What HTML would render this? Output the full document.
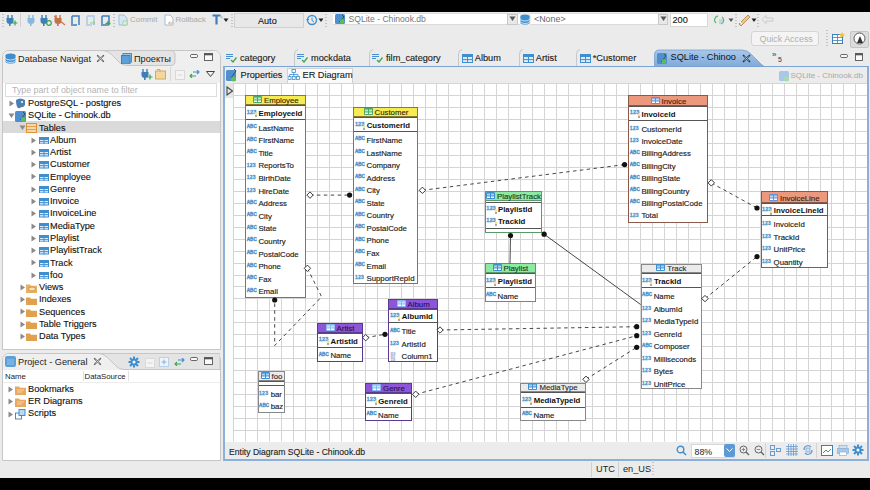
<!DOCTYPE html><html><head><meta charset="utf-8"><style>

html,body{margin:0;padding:0;}
body{width:870px;height:490px;position:relative;overflow:hidden;background:#ebebeb;font-family:"Liberation Sans", sans-serif;}
.t{position:absolute;white-space:nowrap;line-height:1;font-family:"Liberation Sans", sans-serif;}
svg{display:block;}

</style></head><body>
<div style="position:absolute;left:0px;top:0px;width:870px;height:12px;background:#000;"></div>
<div style="position:absolute;left:0px;top:478.4px;width:870px;height:12px;background:#000;"></div>
<svg style="position:absolute;left:1.5px;top:14px;" width="2" height="13" viewBox="0 0 2 13"><rect x="0.5" y="0" width="1" height="1" fill="#9a9a9a"/><rect x="0.5" y="3" width="1" height="1" fill="#9a9a9a"/><rect x="0.5" y="6" width="1" height="1" fill="#9a9a9a"/><rect x="0.5" y="9" width="1" height="1" fill="#9a9a9a"/><rect x="0.5" y="12" width="1" height="1" fill="#9a9a9a"/></svg>
<svg style="position:absolute;left:6px;top:15px;" width="12" height="11" viewBox="0 0 12 11"><path d="M2 0 v3 M6 0 v3" stroke="#3f7fb8" stroke-width="1.4"/><path d="M0.5 3 h7 v3 q0 3 -3.5 3 q-3.5 0 -3.5 -3 z" fill="#3f7fb8"/><rect x="3" y="8.5" width="1.6" height="2.5" fill="#3f7fb8"/><path d="M9 5.5 v5 M6.5 8 h5" stroke="#3aa650" stroke-width="1.2"/></svg>
<div style="position:absolute;left:20px;top:13px;width:1px;height:14px;background:#cfcfcf;"></div>
<svg style="position:absolute;left:27px;top:15px;" width="12" height="11" viewBox="0 0 12 11"><path d="M2 0 v3 M6 0 v3" stroke="#8ab8dc" stroke-width="1.4"/><path d="M0.5 3 h7 v3 q0 3 -3.5 3 q-3.5 0 -3.5 -3 z" fill="#8ab8dc"/><rect x="3" y="8.5" width="1.6" height="2.5" fill="#8ab8dc"/></svg>
<svg style="position:absolute;left:40px;top:15px;" width="12" height="11" viewBox="0 0 12 11"><path d="M2 0 v3 M6 0 v3" stroke="#3f7fb8" stroke-width="1.4"/><path d="M0.5 3 h7 v3 q0 3 -3.5 3 q-3.5 0 -3.5 -3 z" fill="#3f7fb8"/><rect x="3" y="8.5" width="1.6" height="2.5" fill="#3f7fb8"/><circle cx="9" cy="8" r="2.3" stroke="#3aa650" stroke-width="1.2" fill="none"/></svg>
<svg style="position:absolute;left:54px;top:15px;" width="12" height="11" viewBox="0 0 12 11"><path d="M2 0 v3 M6 0 v3" stroke="#c5734a" stroke-width="1.4"/><path d="M0.5 3 h7 v3 q0 3 -3.5 3 q-3.5 0 -3.5 -3 z" fill="#c5734a"/><rect x="3" y="8.5" width="1.6" height="2.5" fill="#c5734a"/><path d="M0 1 L11 10" stroke="#c5734a" stroke-width="1.1"/></svg>
<svg style="position:absolute;left:70px;top:15px;" width="11" height="11" viewBox="0 0 11 11"><path d="M2 1 h7 v9 M1 10 h6 M2 1 v8" stroke="#3f7fb8" stroke-width="1.5" fill="none"/></svg>
<svg style="position:absolute;left:85px;top:15px;" width="11" height="11" viewBox="0 0 11 11"><path d="M2 1 h7 v9 M1 10 h6 M2 1 v8" stroke="#a8cbe6" stroke-width="1.5" fill="none"/><path d="M5 8 h5 M8 6 l2 2 l-2 2" stroke="#8fce8f" stroke-width="1" fill="none"/></svg>
<svg style="position:absolute;left:100px;top:15px;" width="11" height="11" viewBox="0 0 11 11"><path d="M2 1 h7 v9 M1 10 h6 M2 1 v8" stroke="#3f7fb8" stroke-width="1.5" fill="none"/><path d="M8 6 v5 M5.5 8.5 h5" stroke="#3aa650" stroke-width="1.4"/></svg>
<svg style="position:absolute;left:113px;top:14px;" width="2" height="13" viewBox="0 0 2 13"><rect x="0.5" y="0" width="1" height="1" fill="#9a9a9a"/><rect x="0.5" y="3" width="1" height="1" fill="#9a9a9a"/><rect x="0.5" y="6" width="1" height="1" fill="#9a9a9a"/><rect x="0.5" y="9" width="1" height="1" fill="#9a9a9a"/><rect x="0.5" y="12" width="1" height="1" fill="#9a9a9a"/></svg>
<svg style="position:absolute;left:118px;top:14px;" width="10" height="12" viewBox="0 0 10 12"><path d="M1 1 h5 l3 3 v7 h-8 z" fill="#d6e6f4" stroke="#9cc0e0"/><rect x="5" y="7" width="4" height="4" fill="#dff0df" stroke="#9fd09f" stroke-width="0.8"/></svg>
<div class="t" style="left:130px;top:16px;font-size:7.95px;color:#a8a8a8;font-weight:normal;">Commit</div>
<svg style="position:absolute;left:164px;top:14px;" width="10" height="12" viewBox="0 0 10 12"><path d="M1 1 h5 l3 3 v7 h-8 z" fill="#fff" stroke="#9cc0e0"/><path d="M5 9 h4 M6 7.5 l-1.5 1.5 l1.5 1.5" stroke="#e0a060" stroke-width="0.9" fill="none"/></svg>
<div class="t" style="left:175.5px;top:16px;font-size:7.95px;color:#a8a8a8;font-weight:normal;">Rollback</div>
<svg style="position:absolute;left:212px;top:14px;" width="12" height="12" viewBox="0 0 12 12"><path d="M0.5 1.5 h8 M4.5 1.5 v9" stroke="#3f7fb8" stroke-width="2.2"/><path d="M8 3 h3 M9.5 1.5 v3" stroke="#9cc0e0" stroke-width="0.8"/></svg>
<svg style="position:absolute;left:223px;top:18px;" width="6" height="5" viewBox="0 0 6 5"><path d="M0.5 0.5 h5 l-2.5 3.5 z" fill="#222"/></svg>
<svg style="position:absolute;left:231px;top:14px;" width="2" height="13" viewBox="0 0 2 13"><rect x="0.5" y="0" width="1" height="1" fill="#9a9a9a"/><rect x="0.5" y="3" width="1" height="1" fill="#9a9a9a"/><rect x="0.5" y="6" width="1" height="1" fill="#9a9a9a"/><rect x="0.5" y="9" width="1" height="1" fill="#9a9a9a"/><rect x="0.5" y="12" width="1" height="1" fill="#9a9a9a"/></svg>
<div style="position:absolute;left:233.5px;top:13px;width:70px;height:14.5px;background:#e8e8e8;border:1px solid #d0d0d0;box-sizing:border-box;"></div>
<div class="t" style="left:258px;top:16.6px;font-size:9.1px;color:#111;font-weight:normal;-webkit-text-stroke:0.1px #111;">Auto</div>
<svg style="position:absolute;left:306px;top:14px;" width="12" height="12" viewBox="0 0 12 12"><circle cx="6" cy="6" r="4.5" stroke="#3f8fd0" stroke-width="1.4" fill="none"/><path d="M6 3.5 v3 l2 1.5" stroke="#3f8fd0" stroke-width="1" fill="none"/><path d="M0 5 l1.5 2 l2 -2" fill="#3f8fd0"/></svg>
<svg style="position:absolute;left:318px;top:18px;" width="6" height="5" viewBox="0 0 6 5"><path d="M0.5 0.5 h5 l-2.5 3.5 z" fill="#222"/></svg>
<svg style="position:absolute;left:325px;top:14px;" width="2" height="13" viewBox="0 0 2 13"><rect x="0.5" y="0" width="1" height="1" fill="#9a9a9a"/><rect x="0.5" y="3" width="1" height="1" fill="#9a9a9a"/><rect x="0.5" y="6" width="1" height="1" fill="#9a9a9a"/><rect x="0.5" y="9" width="1" height="1" fill="#9a9a9a"/><rect x="0.5" y="12" width="1" height="1" fill="#9a9a9a"/></svg>
<div style="position:absolute;left:333px;top:12.5px;width:187px;height:12.5px;background:#fff;border-top:1px solid #dadada;border-bottom:1px solid #dadada;box-sizing:border-box;"></div>
<svg style="position:absolute;left:334.5px;top:13.5px;" width="10" height="10" viewBox="0 0 10 10"><rect x="0" y="0" width="10" height="10" rx="1.5" fill="#4f8fd0"/><path d="M7 1 L9 3 L5 7 L4 8" stroke="#2a5a3a" stroke-width="1" fill="none"/><circle cx="7" cy="7.5" r="2.2" fill="#5bbf5b"/></svg>
<div class="t" style="left:348.5px;top:15.3px;font-size:8.6px;color:#777;font-weight:normal;">SQLite - Chinook.db</div>
<div style="position:absolute;left:507px;top:13.5px;width:11px;height:11px;background:#e8e8e8;border:1px solid #c8c8c8;box-sizing:border-box;"></div>
<svg style="position:absolute;left:509px;top:16px;" width="7" height="6" viewBox="0 0 7 6"><path d="M0.5 0.5 h6 l-3 4.5 z" fill="#555"/></svg>
<svg style="position:absolute;left:520px;top:13.5px;" width="10" height="11" viewBox="0 0 10 11"><ellipse cx="5" cy="2.5" rx="4.5" ry="2" fill="#3f8fd0"/><path d="M0.5 2.5 v6 a4.5 2 0 0 0 9 0 v-6" fill="#3f8fd0"/><path d="M0.5 5 a4.5 2 0 0 0 9 0 M0.5 7.5 a4.5 2 0 0 0 9 0" stroke="#fff" stroke-width="0.7" fill="none"/></svg>
<div style="position:absolute;left:531px;top:12.5px;width:136px;height:12.5px;background:#fff;border-top:1px solid #dadada;border-bottom:1px solid #dadada;box-sizing:border-box;"></div>
<div class="t" style="left:534px;top:15px;font-size:8.9px;color:#666;font-weight:normal;">&lt;None&gt;</div>
<div style="position:absolute;left:657.5px;top:13.5px;width:10px;height:11px;background:#e8e8e8;border:1px solid #c8c8c8;box-sizing:border-box;"></div>
<svg style="position:absolute;left:659.5px;top:16px;" width="7" height="6" viewBox="0 0 7 6"><path d="M0.5 0.5 h6 l-3 4.5 z" fill="#555"/></svg>
<div style="position:absolute;left:670px;top:12.5px;width:38px;height:14px;background:#fff;border:1px solid #d8d8d8;box-sizing:border-box;"></div>
<div class="t" style="left:672.5px;top:16.2px;font-size:9.2px;color:#111;font-weight:normal;-webkit-text-stroke:0.1px #111;">200</div>
<svg style="position:absolute;left:714px;top:14px;" width="12" height="12" viewBox="0 0 12 12"><path d="M2 9 a4 4 0 0 1 2 -7 M8 3 a4 4 0 0 1 -1 7" stroke="#5cc070" stroke-width="1.3" fill="none"/><path d="M6 5 v5 M8 5 v5" stroke="#8ab8dc" stroke-width="0.8"/></svg>
<svg style="position:absolute;left:728px;top:18px;" width="6" height="5" viewBox="0 0 6 5"><path d="M0.5 0.5 h5 l-2.5 3.5 z" fill="#555"/></svg>
<svg style="position:absolute;left:735px;top:14px;" width="2" height="13" viewBox="0 0 2 13"><rect x="0.5" y="0" width="1" height="1" fill="#9a9a9a"/><rect x="0.5" y="3" width="1" height="1" fill="#9a9a9a"/><rect x="0.5" y="6" width="1" height="1" fill="#9a9a9a"/><rect x="0.5" y="9" width="1" height="1" fill="#9a9a9a"/><rect x="0.5" y="12" width="1" height="1" fill="#9a9a9a"/></svg>
<svg style="position:absolute;left:737px;top:13px;" width="14" height="13" viewBox="0 0 14 13"><path d="M2 11 L11 2 L13 4 L4 13 Z" fill="#e8c890" stroke="#b08050" stroke-width="0.8"/><path d="M3 9 l2 2" stroke="#fff"/></svg>
<svg style="position:absolute;left:751px;top:18px;" width="6" height="5" viewBox="0 0 6 5"><path d="M0.5 0.5 h5 l-2.5 3.5 z" fill="#222"/></svg>
<svg style="position:absolute;left:757px;top:14px;" width="2" height="13" viewBox="0 0 2 13"><rect x="0.5" y="0" width="1" height="1" fill="#9a9a9a"/><rect x="0.5" y="3" width="1" height="1" fill="#9a9a9a"/><rect x="0.5" y="6" width="1" height="1" fill="#9a9a9a"/><rect x="0.5" y="9" width="1" height="1" fill="#9a9a9a"/><rect x="0.5" y="12" width="1" height="1" fill="#9a9a9a"/></svg>
<svg style="position:absolute;left:761px;top:15px;" width="13" height="9" viewBox="0 0 13 9"><path d="M5 0.5 L1 4.5 L5 8.5 V6 H12 V3 H5 Z" fill="none" stroke="#c8c8c8"/></svg>
<div style="position:absolute;left:751px;top:31px;width:68px;height:15px;background:#f4f4f4;border:1px solid #d4d4d4;border-radius:3px;box-sizing:border-box;"></div>
<div class="t" style="left:759.5px;top:34.5px;font-size:8.9px;color:#b0b0b0;font-weight:normal;">Quick Access</div>
<svg style="position:absolute;left:826px;top:30px;" width="2" height="17" viewBox="0 0 2 17"><rect x="0.5" y="0" width="1" height="1" fill="#9a9a9a"/><rect x="0.5" y="3" width="1" height="1" fill="#9a9a9a"/><rect x="0.5" y="6" width="1" height="1" fill="#9a9a9a"/><rect x="0.5" y="9" width="1" height="1" fill="#9a9a9a"/><rect x="0.5" y="12" width="1" height="1" fill="#9a9a9a"/><rect x="0.5" y="15" width="1" height="1" fill="#9a9a9a"/></svg>
<svg style="position:absolute;left:832px;top:32px;" width="13" height="12" viewBox="0 0 13 12"><rect x="0.5" y="2.5" width="10" height="9" fill="#fff" stroke="#3f7fb8"/><path d="M0.5 5.5 h10 M0.5 8.5 h10 M5.5 2.5 v9" stroke="#3f7fb8" stroke-width="0.8"/><path d="M10 0 l1 2 l2 0.5 l-1.5 1.3 l0.5 2 l-2 -1 l-2 1 l0.5 -2 l-1.5 -1.3 l2 -0.5 z" fill="#f0c040"/></svg>
<div style="position:absolute;left:850px;top:30.5px;width:19px;height:17px;background:#dcdcdc;border:1px solid #c4c4c4;border-radius:2px;box-sizing:border-box;"></div>
<svg style="position:absolute;left:853px;top:32px;" width="13" height="13" viewBox="0 0 13 13"><circle cx="6.5" cy="6.5" r="5.5" fill="#fff" stroke="#555"/><path d="M4 11 L7 4 L10 11 Z" fill="#333"/></svg>
<div style="position:absolute;left:1.5px;top:50px;width:219px;height:300px;background:#fff;border:1px solid #c6c6c6;border-radius:7px 7px 0 0;box-sizing:border-box;"></div>
<div style="position:absolute;left:2.5px;top:51px;width:217px;height:31.5px;background:#efefef;border-radius:6px 6px 0 0;"></div>
<svg style="position:absolute;left:2.5px;top:50px;" width="217" height="17" viewBox="0 0 217 17"><path d="M100 0.5 Q104 0.5 108 4 L117 13 Q120 15.5 125 15.5 H168 Q172 15.5 172 11 V5 Q172 0.5 167 0.5 Z" fill="#e4e4e4" stroke="#c6c6c6" stroke-width="1"/></svg>
<svg style="position:absolute;left:5px;top:53px;" width="11" height="11" viewBox="0 0 11 11"><ellipse cx="5.5" cy="2.5" rx="5" ry="2" fill="#3f8fd0"/><path d="M0.5 2.5 v6 a5 2 0 0 0 10 0 v-6" fill="#3f8fd0"/><path d="M0.5 5 a5 2 0 0 0 10 0 M0.5 7.5 a5 2 0 0 0 10 0" stroke="#fff" stroke-width="0.7" fill="none"/></svg>
<div class="t" style="left:18px;top:54.5px;font-size:9.2px;color:#222;font-weight:normal;">Database Navigat</div>
<svg style="position:absolute;left:96px;top:54px;" width="9" height="9" viewBox="0 0 9 9"><path d="M1.2 1.2 L7.8 7.8 M7.8 1.2 L1.2 7.8" stroke="#555" stroke-width="1.4"/><path d="M2.5 2.5 L6.5 6.5 M6.5 2.5 L2.5 6.5" stroke="#efefef" stroke-width="0.6"/></svg>
<svg style="position:absolute;left:121px;top:53px;" width="11" height="11" viewBox="0 0 11 11"><rect x="2" y="0.5" width="8.5" height="8.5" fill="#9cc5ea" stroke="#3f8fd0"/><rect x="0.5" y="2.5" width="8.5" height="8.5" fill="#5d9fd8" stroke="#3f7fb8"/></svg>
<div class="t" style="left:134px;top:54.5px;font-size:9.2px;color:#222;font-weight:normal;">Проекты</div>
<svg style="position:absolute;left:189.5px;top:53.5px;" width="8" height="4" viewBox="0 0 8 4"><rect x="0.5" y="0.5" width="7" height="3" rx="1.2" fill="#fafafa" stroke="#555" stroke-width="0.9"/></svg>
<svg style="position:absolute;left:204px;top:53px;" width="9" height="8" viewBox="0 0 9 8"><rect x="0.5" y="0.5" width="8" height="7" fill="#fafafa" stroke="#555" stroke-width="0.9"/><rect x="0.5" y="0.5" width="8" height="1.8" fill="#555"/></svg>
<svg style="position:absolute;left:141px;top:69px;" width="12" height="11" viewBox="0 0 12 11"><path d="M2 0 v3 M6 0 v3" stroke="#3f7fb8" stroke-width="1.4"/><path d="M0.5 3 h7 v3 q0 3 -3.5 3 q-3.5 0 -3.5 -3 z" fill="#3f7fb8"/><rect x="3" y="8.5" width="1.6" height="2.5" fill="#3f7fb8"/><path d="M9 5.5 v5 M6.5 8 h5" stroke="#3aa650" stroke-width="1.2"/></svg>
<svg style="position:absolute;left:155px;top:69px;" width="12" height="11" viewBox="0 0 12 11"><rect x="0.5" y="2" width="10" height="8" fill="#f0d8a0" stroke="#d8a850"/><path d="M2 0.5 h3 v2" stroke="#d8a850" fill="none"/></svg>
<div style="position:absolute;left:170px;top:67px;width:1px;height:14px;background:#d8d8d8;"></div>
<svg style="position:absolute;left:175px;top:70px;" width="10" height="10" viewBox="0 0 10 10"><rect x="0.5" y="0.5" width="9" height="9" fill="#f4f4f4" stroke="#d8d8d8"/><path d="M2.5 5 h5" stroke="#d8d8d8"/></svg>
<svg style="position:absolute;left:189px;top:70px;" width="11" height="8" viewBox="0 0 11 8"><path d="M1 6 h6 M3 4 l-2 2 l2 2" stroke="#3aa650" stroke-width="1.1" fill="none"/><path d="M4 2 h6 M8 0 l2 2 l-2 2" stroke="#3f8fd0" stroke-width="1.1" fill="none"/></svg>
<svg style="position:absolute;left:206px;top:71px;" width="9" height="6" viewBox="0 0 9 6"><path d="M0.5 0.5 h8 l-4 5 z" fill="none" stroke="#444"/></svg>
<div style="position:absolute;left:4.5px;top:83px;width:212px;height:14px;background:#fff;border:1px solid #dcdcdc;box-sizing:border-box;"></div>
<div class="t" style="left:12px;top:85.5px;font-size:8.8px;color:#b4b4b4;font-weight:normal;">Type part of object name to filter</div>
<div style="position:absolute;left:2.5px;top:121.14px;width:217px;height:11.5px;background:#dadada;"></div>
<svg style="position:absolute;left:7.8px;top:99.8px;" width="7" height="7" viewBox="0 0 7 7"><path d="M1.5 0.5 L6 3.5 L1.5 6.5 Z" fill="#8a8a8a"/></svg>
<svg style="position:absolute;left:15px;top:98.3px;" width="11" height="11" viewBox="0 0 11 11"><path d="M1 2 q4 -3 9 0 v5 q-2 3 -4 2 q-1 2 -3 1 q-2 -2 -2 -8z" fill="#4a7fb0"/><circle cx="7" cy="4" r="1" fill="#fff"/></svg>
<div class="t" style="left:28px;top:99.0px;font-size:9.2px;color:#111;font-weight:normal;-webkit-text-stroke:0.12px #111;">PostgreSQL - postgres</div>
<svg style="position:absolute;left:7.8px;top:112.07px;" width="7" height="7" viewBox="0 0 7 7"><path d="M0.5 1.5 L6.5 1.5 L3.5 6 Z" fill="#8a8a8a"/></svg>
<svg style="position:absolute;left:15px;top:110.57px;" width="11" height="11" viewBox="0 0 11 11"><rect x="0" y="0" width="11" height="11" rx="1.5" fill="#4f8fd0"/><path d="M8 1 L10 3 L6 8 L5 9" stroke="#2a5a3a" stroke-width="1" fill="none"/><circle cx="8" cy="8.5" r="2.2" fill="#5bbf5b"/></svg>
<div class="t" style="left:28px;top:111.27px;font-size:9.2px;color:#111;font-weight:normal;-webkit-text-stroke:0.12px #111;">SQLite - Chinook.db</div>
<svg style="position:absolute;left:18.8px;top:124.34px;" width="7" height="7" viewBox="0 0 7 7"><path d="M0.5 1.5 L6.5 1.5 L3.5 6 Z" fill="#8a8a8a"/></svg>
<svg style="position:absolute;left:26px;top:123.34px;" width="11" height="10" viewBox="0 0 11 10"><rect x="0.5" y="0.5" width="10" height="9" fill="#f6d8a8" stroke="#e0903a"/><path d="M0.5 3.5 h10 M0.5 6.5 h10" stroke="#e0903a" stroke-width="0.8"/></svg>
<div class="t" style="left:39px;top:123.54px;font-size:9.2px;color:#111;font-weight:normal;-webkit-text-stroke:0.12px #111;">Tables</div>
<svg style="position:absolute;left:29.8px;top:136.61px;" width="7" height="7" viewBox="0 0 7 7"><path d="M1.5 0.5 L6 3.5 L1.5 6.5 Z" fill="#8a8a8a"/></svg>
<svg style="position:absolute;left:38.5px;top:136.81px;" width="10" height="7.5" viewBox="0 0 10 7.5"><rect x="0.5" y="0.5" width="9" height="6.5" fill="#dcebf8" stroke="#3f8fd0"/><rect x="0.5" y="0.5" width="9" height="2.5" fill="#3f8fd0"/><line x1="5.0" y1="0" x2="5.0" y2="7.5" stroke="#3f8fd0"/><line x1="0" y1="4.65" x2="10" y2="4.65" stroke="#3f8fd0"/></svg>
<div class="t" style="left:50px;top:135.81px;font-size:9.2px;color:#111;font-weight:normal;-webkit-text-stroke:0.12px #111;">Album</div>
<svg style="position:absolute;left:29.8px;top:148.88px;" width="7" height="7" viewBox="0 0 7 7"><path d="M1.5 0.5 L6 3.5 L1.5 6.5 Z" fill="#8a8a8a"/></svg>
<svg style="position:absolute;left:38.5px;top:149.07999999999998px;" width="10" height="7.5" viewBox="0 0 10 7.5"><rect x="0.5" y="0.5" width="9" height="6.5" fill="#dcebf8" stroke="#3f8fd0"/><rect x="0.5" y="0.5" width="9" height="2.5" fill="#3f8fd0"/><line x1="5.0" y1="0" x2="5.0" y2="7.5" stroke="#3f8fd0"/><line x1="0" y1="4.65" x2="10" y2="4.65" stroke="#3f8fd0"/></svg>
<div class="t" style="left:50px;top:148.07999999999998px;font-size:9.2px;color:#111;font-weight:normal;-webkit-text-stroke:0.12px #111;">Artist</div>
<svg style="position:absolute;left:29.8px;top:161.14999999999998px;" width="7" height="7" viewBox="0 0 7 7"><path d="M1.5 0.5 L6 3.5 L1.5 6.5 Z" fill="#8a8a8a"/></svg>
<svg style="position:absolute;left:38.5px;top:161.34999999999997px;" width="10" height="7.5" viewBox="0 0 10 7.5"><rect x="0.5" y="0.5" width="9" height="6.5" fill="#dcebf8" stroke="#3f8fd0"/><rect x="0.5" y="0.5" width="9" height="2.5" fill="#3f8fd0"/><line x1="5.0" y1="0" x2="5.0" y2="7.5" stroke="#3f8fd0"/><line x1="0" y1="4.65" x2="10" y2="4.65" stroke="#3f8fd0"/></svg>
<div class="t" style="left:50px;top:160.34999999999997px;font-size:9.2px;color:#111;font-weight:normal;-webkit-text-stroke:0.12px #111;">Customer</div>
<svg style="position:absolute;left:29.8px;top:173.42000000000002px;" width="7" height="7" viewBox="0 0 7 7"><path d="M1.5 0.5 L6 3.5 L1.5 6.5 Z" fill="#8a8a8a"/></svg>
<svg style="position:absolute;left:38.5px;top:173.62px;" width="10" height="7.5" viewBox="0 0 10 7.5"><rect x="0.5" y="0.5" width="9" height="6.5" fill="#dcebf8" stroke="#3f8fd0"/><rect x="0.5" y="0.5" width="9" height="2.5" fill="#3f8fd0"/><line x1="5.0" y1="0" x2="5.0" y2="7.5" stroke="#3f8fd0"/><line x1="0" y1="4.65" x2="10" y2="4.65" stroke="#3f8fd0"/></svg>
<div class="t" style="left:50px;top:172.62px;font-size:9.2px;color:#111;font-weight:normal;-webkit-text-stroke:0.12px #111;">Employee</div>
<svg style="position:absolute;left:29.8px;top:185.69px;" width="7" height="7" viewBox="0 0 7 7"><path d="M1.5 0.5 L6 3.5 L1.5 6.5 Z" fill="#8a8a8a"/></svg>
<svg style="position:absolute;left:38.5px;top:185.89px;" width="10" height="7.5" viewBox="0 0 10 7.5"><rect x="0.5" y="0.5" width="9" height="6.5" fill="#dcebf8" stroke="#3f8fd0"/><rect x="0.5" y="0.5" width="9" height="2.5" fill="#3f8fd0"/><line x1="5.0" y1="0" x2="5.0" y2="7.5" stroke="#3f8fd0"/><line x1="0" y1="4.65" x2="10" y2="4.65" stroke="#3f8fd0"/></svg>
<div class="t" style="left:50px;top:184.89px;font-size:9.2px;color:#111;font-weight:normal;-webkit-text-stroke:0.12px #111;">Genre</div>
<svg style="position:absolute;left:29.8px;top:197.95999999999998px;" width="7" height="7" viewBox="0 0 7 7"><path d="M1.5 0.5 L6 3.5 L1.5 6.5 Z" fill="#8a8a8a"/></svg>
<svg style="position:absolute;left:38.5px;top:198.15999999999997px;" width="10" height="7.5" viewBox="0 0 10 7.5"><rect x="0.5" y="0.5" width="9" height="6.5" fill="#dcebf8" stroke="#3f8fd0"/><rect x="0.5" y="0.5" width="9" height="2.5" fill="#3f8fd0"/><line x1="5.0" y1="0" x2="5.0" y2="7.5" stroke="#3f8fd0"/><line x1="0" y1="4.65" x2="10" y2="4.65" stroke="#3f8fd0"/></svg>
<div class="t" style="left:50px;top:197.15999999999997px;font-size:9.2px;color:#111;font-weight:normal;-webkit-text-stroke:0.12px #111;">Invoice</div>
<svg style="position:absolute;left:29.8px;top:210.23px;" width="7" height="7" viewBox="0 0 7 7"><path d="M1.5 0.5 L6 3.5 L1.5 6.5 Z" fill="#8a8a8a"/></svg>
<svg style="position:absolute;left:38.5px;top:210.42999999999998px;" width="10" height="7.5" viewBox="0 0 10 7.5"><rect x="0.5" y="0.5" width="9" height="6.5" fill="#dcebf8" stroke="#3f8fd0"/><rect x="0.5" y="0.5" width="9" height="2.5" fill="#3f8fd0"/><line x1="5.0" y1="0" x2="5.0" y2="7.5" stroke="#3f8fd0"/><line x1="0" y1="4.65" x2="10" y2="4.65" stroke="#3f8fd0"/></svg>
<div class="t" style="left:50px;top:209.42999999999998px;font-size:9.2px;color:#111;font-weight:normal;-webkit-text-stroke:0.12px #111;">InvoiceLine</div>
<svg style="position:absolute;left:29.8px;top:222.5px;" width="7" height="7" viewBox="0 0 7 7"><path d="M1.5 0.5 L6 3.5 L1.5 6.5 Z" fill="#8a8a8a"/></svg>
<svg style="position:absolute;left:38.5px;top:222.7px;" width="10" height="7.5" viewBox="0 0 10 7.5"><rect x="0.5" y="0.5" width="9" height="6.5" fill="#dcebf8" stroke="#3f8fd0"/><rect x="0.5" y="0.5" width="9" height="2.5" fill="#3f8fd0"/><line x1="5.0" y1="0" x2="5.0" y2="7.5" stroke="#3f8fd0"/><line x1="0" y1="4.65" x2="10" y2="4.65" stroke="#3f8fd0"/></svg>
<div class="t" style="left:50px;top:221.7px;font-size:9.2px;color:#111;font-weight:normal;-webkit-text-stroke:0.12px #111;">MediaType</div>
<svg style="position:absolute;left:29.8px;top:234.76999999999998px;" width="7" height="7" viewBox="0 0 7 7"><path d="M1.5 0.5 L6 3.5 L1.5 6.5 Z" fill="#8a8a8a"/></svg>
<svg style="position:absolute;left:38.5px;top:234.96999999999997px;" width="10" height="7.5" viewBox="0 0 10 7.5"><rect x="0.5" y="0.5" width="9" height="6.5" fill="#dcebf8" stroke="#3f8fd0"/><rect x="0.5" y="0.5" width="9" height="2.5" fill="#3f8fd0"/><line x1="5.0" y1="0" x2="5.0" y2="7.5" stroke="#3f8fd0"/><line x1="0" y1="4.65" x2="10" y2="4.65" stroke="#3f8fd0"/></svg>
<div class="t" style="left:50px;top:233.96999999999997px;font-size:9.2px;color:#111;font-weight:normal;-webkit-text-stroke:0.12px #111;">Playlist</div>
<svg style="position:absolute;left:29.8px;top:247.04000000000002px;" width="7" height="7" viewBox="0 0 7 7"><path d="M1.5 0.5 L6 3.5 L1.5 6.5 Z" fill="#8a8a8a"/></svg>
<svg style="position:absolute;left:38.5px;top:247.24px;" width="10" height="7.5" viewBox="0 0 10 7.5"><rect x="0.5" y="0.5" width="9" height="6.5" fill="#dcebf8" stroke="#3f8fd0"/><rect x="0.5" y="0.5" width="9" height="2.5" fill="#3f8fd0"/><line x1="5.0" y1="0" x2="5.0" y2="7.5" stroke="#3f8fd0"/><line x1="0" y1="4.65" x2="10" y2="4.65" stroke="#3f8fd0"/></svg>
<div class="t" style="left:50px;top:246.24px;font-size:9.2px;color:#111;font-weight:normal;-webkit-text-stroke:0.12px #111;">PlaylistTrack</div>
<svg style="position:absolute;left:29.8px;top:259.31px;" width="7" height="7" viewBox="0 0 7 7"><path d="M1.5 0.5 L6 3.5 L1.5 6.5 Z" fill="#8a8a8a"/></svg>
<svg style="position:absolute;left:38.5px;top:259.51px;" width="10" height="7.5" viewBox="0 0 10 7.5"><rect x="0.5" y="0.5" width="9" height="6.5" fill="#dcebf8" stroke="#3f8fd0"/><rect x="0.5" y="0.5" width="9" height="2.5" fill="#3f8fd0"/><line x1="5.0" y1="0" x2="5.0" y2="7.5" stroke="#3f8fd0"/><line x1="0" y1="4.65" x2="10" y2="4.65" stroke="#3f8fd0"/></svg>
<div class="t" style="left:50px;top:258.51px;font-size:9.2px;color:#111;font-weight:normal;-webkit-text-stroke:0.12px #111;">Track</div>
<svg style="position:absolute;left:29.8px;top:271.58px;" width="7" height="7" viewBox="0 0 7 7"><path d="M1.5 0.5 L6 3.5 L1.5 6.5 Z" fill="#8a8a8a"/></svg>
<svg style="position:absolute;left:38.5px;top:271.78px;" width="10" height="7.5" viewBox="0 0 10 7.5"><rect x="0.5" y="0.5" width="9" height="6.5" fill="#dcebf8" stroke="#3f8fd0"/><rect x="0.5" y="0.5" width="9" height="2.5" fill="#3f8fd0"/><line x1="5.0" y1="0" x2="5.0" y2="7.5" stroke="#3f8fd0"/><line x1="0" y1="4.65" x2="10" y2="4.65" stroke="#3f8fd0"/></svg>
<div class="t" style="left:50px;top:270.78px;font-size:9.2px;color:#111;font-weight:normal;-webkit-text-stroke:0.12px #111;">foo</div>
<svg style="position:absolute;left:18.8px;top:283.84999999999997px;" width="7" height="7" viewBox="0 0 7 7"><path d="M1.5 0.5 L6 3.5 L1.5 6.5 Z" fill="#8a8a8a"/></svg>
<svg style="position:absolute;left:26px;top:282.84999999999997px;" width="11" height="10" viewBox="0 0 11 10"><path d="M0 1.5 h4 l1 1.2 h6 v7.3 h-11 z" fill="#e8b060"/><ellipse cx="6" cy="6" rx="3.5" ry="2" fill="#f8e0b0" stroke="#c08040" stroke-width="0.7"/></svg>
<div class="t" style="left:39px;top:283.04999999999995px;font-size:9.2px;color:#111;font-weight:normal;-webkit-text-stroke:0.12px #111;">Views</div>
<svg style="position:absolute;left:18.8px;top:296.12px;" width="7" height="7" viewBox="0 0 7 7"><path d="M1.5 0.5 L6 3.5 L1.5 6.5 Z" fill="#8a8a8a"/></svg>
<svg style="position:absolute;left:26px;top:295.62px;" width="11" height="9" viewBox="0 0 11 9"><path d="M0 1.5 h4 l1 1.2 h6 v6.3 h-11 z" fill="#e0a050"/></svg>
<div class="t" style="left:39px;top:295.32px;font-size:9.2px;color:#111;font-weight:normal;-webkit-text-stroke:0.12px #111;">Indexes</div>
<svg style="position:absolute;left:18.8px;top:308.39px;" width="7" height="7" viewBox="0 0 7 7"><path d="M1.5 0.5 L6 3.5 L1.5 6.5 Z" fill="#8a8a8a"/></svg>
<svg style="position:absolute;left:26px;top:307.89px;" width="11" height="9" viewBox="0 0 11 9"><path d="M0 1.5 h4 l1 1.2 h6 v6.3 h-11 z" fill="#e0a050"/></svg>
<div class="t" style="left:39px;top:307.59px;font-size:9.2px;color:#111;font-weight:normal;-webkit-text-stroke:0.12px #111;">Sequences</div>
<svg style="position:absolute;left:18.8px;top:320.65999999999997px;" width="7" height="7" viewBox="0 0 7 7"><path d="M1.5 0.5 L6 3.5 L1.5 6.5 Z" fill="#8a8a8a"/></svg>
<svg style="position:absolute;left:26px;top:320.15999999999997px;" width="11" height="9" viewBox="0 0 11 9"><path d="M0 1.5 h4 l1 1.2 h6 v6.3 h-11 z" fill="#e0a050"/></svg>
<div class="t" style="left:39px;top:319.85999999999996px;font-size:9.2px;color:#111;font-weight:normal;-webkit-text-stroke:0.12px #111;">Table Triggers</div>
<svg style="position:absolute;left:18.8px;top:332.93px;" width="7" height="7" viewBox="0 0 7 7"><path d="M1.5 0.5 L6 3.5 L1.5 6.5 Z" fill="#8a8a8a"/></svg>
<svg style="position:absolute;left:26px;top:332.43px;" width="11" height="9" viewBox="0 0 11 9"><path d="M0 1.5 h4 l1 1.2 h6 v6.3 h-11 z" fill="#e0a050"/></svg>
<div class="t" style="left:39px;top:332.13px;font-size:9.2px;color:#111;font-weight:normal;-webkit-text-stroke:0.12px #111;">Data Types</div>
<div style="position:absolute;left:1.5px;top:353px;width:219px;height:108px;background:#fff;border:1px solid #c6c6c6;border-radius:7px 7px 0 0;box-sizing:border-box;"></div>
<div style="position:absolute;left:2.5px;top:354px;width:217px;height:15.5px;background:#efefef;border-radius:6px 6px 0 0;"></div>
<svg style="position:absolute;left:2.5px;top:353px;" width="217" height="17" viewBox="0 0 217 17"><path d="M96 0.5 Q100 0.5 104 4 L113 13 Q116 16.5 121 16.5 H217 V0.5 Z" fill="#e4e4e4" stroke="#c6c6c6" stroke-width="1"/></svg>
<svg style="position:absolute;left:5px;top:356px;" width="11" height="11" viewBox="0 0 11 11"><rect x="0" y="0" width="11" height="11" rx="2" fill="#5d9fd8"/><path d="M2 4 h7 M2 6 h7 M2 8 h7" stroke="#a8ccee" stroke-width="0.8"/></svg>
<div class="t" style="left:18px;top:357.5px;font-size:9.2px;color:#222;font-weight:normal;">Project - General</div>
<svg style="position:absolute;left:93px;top:357px;" width="9" height="9" viewBox="0 0 9 9"><path d="M1.2 1.2 L7.8 7.8 M7.8 1.2 L1.2 7.8" stroke="#555" stroke-width="1.4"/><path d="M2.5 2.5 L6.5 6.5 M6.5 2.5 L2.5 6.5" stroke="#efefef" stroke-width="0.6"/></svg>
<svg style="position:absolute;left:128px;top:355.5px;" width="12" height="12" viewBox="0 0 12 12"><circle cx="6" cy="6" r="3.5" fill="#3f8fd0"/><path d="M6 0.5 v11 M0.5 6 h11 M2 2 l8 8 M10 2 l-8 8" stroke="#3f8fd0" stroke-width="2"/><circle cx="6" cy="6" r="1.5" fill="#fff"/></svg>
<svg style="position:absolute;left:145px;top:357.5px;" width="10" height="10" viewBox="0 0 10 10"><rect x="0.5" y="0.5" width="9" height="9" fill="#f4f4f4" stroke="#dadada"/><path d="M2.5 5 h5" stroke="#d4d4d4"/></svg>
<svg style="position:absolute;left:159px;top:357px;" width="10" height="10" viewBox="0 0 10 10"><rect x="0.5" y="0.5" width="9" height="9" fill="#eef4fa" stroke="#b8d0e8"/><path d="M2.5 5 h5 M5 2.5 v5" stroke="#8ab0d8"/></svg>
<svg style="position:absolute;left:174px;top:358px;" width="11" height="8" viewBox="0 0 11 8"><path d="M1 6 h6 M3 4 l-2 2 l2 2" stroke="#3aa650" stroke-width="1.1" fill="none"/><path d="M4 2 h6 M8 0 l2 2 l-2 2" stroke="#3f8fd0" stroke-width="1.1" fill="none"/></svg>
<svg style="position:absolute;left:189.5px;top:356.5px;" width="8" height="4" viewBox="0 0 8 4"><rect x="0.5" y="0.5" width="7" height="3" rx="1.2" fill="#fafafa" stroke="#555" stroke-width="0.9"/></svg>
<svg style="position:absolute;left:204px;top:357px;" width="9" height="8" viewBox="0 0 9 8"><rect x="0.5" y="0.5" width="8" height="7" fill="#fafafa" stroke="#555" stroke-width="0.9"/><rect x="0.5" y="0.5" width="8" height="1.8" fill="#555"/></svg>
<div class="t" style="left:5px;top:372.8px;font-size:7.8px;color:#222;font-weight:normal;">Name</div>
<div style="position:absolute;left:82.5px;top:371px;width:1px;height:10px;background:#e0e0e0;"></div>
<div class="t" style="left:84.5px;top:372.8px;font-size:7.8px;color:#222;font-weight:normal;">DataSource</div>
<div style="position:absolute;left:127.5px;top:371px;width:1px;height:10px;background:#e0e0e0;"></div>
<div style="position:absolute;left:2.5px;top:382px;width:217px;height:1px;background:#ececec;"></div>
<svg style="position:absolute;left:7px;top:386.0px;" width="7" height="7" viewBox="0 0 7 7"><path d="M1.5 0.5 L6 3.5 L1.5 6.5 Z" fill="#8a8a8a"/></svg>
<svg style="position:absolute;left:15px;top:384.5px;" width="11" height="10" viewBox="0 0 11 10"><path d="M0 1.5 h4 l1 1.2 h6 v7.3 h-11 z" fill="#e8a860"/><path d="M2 5 h7 M2 7 h5" stroke="#f8e0c0" stroke-width="0.8"/></svg>
<div class="t" style="left:28px;top:384.7px;font-size:9.2px;color:#111;font-weight:normal;-webkit-text-stroke:0.12px #111;">Bookmarks</div>
<svg style="position:absolute;left:7px;top:398.25px;" width="7" height="7" viewBox="0 0 7 7"><path d="M1.5 0.5 L6 3.5 L1.5 6.5 Z" fill="#8a8a8a"/></svg>
<svg style="position:absolute;left:15px;top:396.75px;" width="11" height="10" viewBox="0 0 11 10"><path d="M0 1.5 h4 l1 1.2 h6 v7.3 h-11 z" fill="#e8a860"/><path d="M2 5 h7 M2 7 h5" stroke="#f8e0c0" stroke-width="0.8"/></svg>
<div class="t" style="left:28px;top:396.95px;font-size:9.2px;color:#111;font-weight:normal;-webkit-text-stroke:0.12px #111;">ER Diagrams</div>
<svg style="position:absolute;left:7px;top:410.5px;" width="7" height="7" viewBox="0 0 7 7"><path d="M1.5 0.5 L6 3.5 L1.5 6.5 Z" fill="#8a8a8a"/></svg>
<svg style="position:absolute;left:15px;top:409.0px;" width="11" height="11" viewBox="0 0 11 11"><rect x="0.5" y="4" width="6" height="6" fill="#fff" stroke="#3f8fd0"/><rect x="4" y="0.5" width="6" height="6" fill="#bcd8f0" stroke="#3f8fd0"/></svg>
<div class="t" style="left:28px;top:409.2px;font-size:9.2px;color:#111;font-weight:normal;-webkit-text-stroke:0.12px #111;">Scripts</div>
<svg style="position:absolute;left:226px;top:53.5px;" width="11" height="9" viewBox="0 0 11 9"><rect x="0" y="0" width="7" height="1" fill="#4a8fd0"/><rect x="0" y="2" width="7" height="1" fill="#4a8fd0"/><rect x="0" y="4" width="4" height="1" fill="#4a8fd0"/><path d="M5 6 L7 8 L10.5 3.5" stroke="#3aa650" stroke-width="1.3" fill="none"/></svg>
<div class="t" style="left:240px;top:53.7px;font-size:9.2px;color:#1a1a1a;font-weight:normal;-webkit-text-stroke:0.12px #1a1a1a;">category</div>
<svg style="position:absolute;left:297px;top:53.5px;" width="11" height="9" viewBox="0 0 11 9"><rect x="0" y="0" width="7" height="1" fill="#4a8fd0"/><rect x="0" y="2" width="7" height="1" fill="#4a8fd0"/><rect x="0" y="4" width="4" height="1" fill="#4a8fd0"/><path d="M5 6 L7 8 L10.5 3.5" stroke="#3aa650" stroke-width="1.3" fill="none"/></svg>
<div class="t" style="left:311px;top:53.7px;font-size:9.2px;color:#1a1a1a;font-weight:normal;-webkit-text-stroke:0.12px #1a1a1a;">mockdata</div>
<svg style="position:absolute;left:372px;top:53.5px;" width="11" height="9" viewBox="0 0 11 9"><rect x="0" y="0" width="7" height="1" fill="#4a8fd0"/><rect x="0" y="2" width="7" height="1" fill="#4a8fd0"/><rect x="0" y="4" width="4" height="1" fill="#4a8fd0"/><path d="M5 6 L7 8 L10.5 3.5" stroke="#3aa650" stroke-width="1.3" fill="none"/></svg>
<div class="t" style="left:386px;top:53.7px;font-size:9.2px;color:#1a1a1a;font-weight:normal;-webkit-text-stroke:0.12px #1a1a1a;">film_category</div>
<svg style="position:absolute;left:462px;top:53.5px;" width="11" height="9" viewBox="0 0 11 9"><rect x="0.5" y="0.5" width="10" height="8" fill="#dcebf8" stroke="#3f8fd0"/><rect x="0.5" y="0.5" width="10" height="2.5" fill="#3f8fd0"/><line x1="5.5" y1="0" x2="5.5" y2="9" stroke="#3f8fd0"/><line x1="0" y1="5.58" x2="11" y2="5.58" stroke="#3f8fd0"/></svg>
<div class="t" style="left:474.8px;top:53.7px;font-size:9.2px;color:#1a1a1a;font-weight:normal;-webkit-text-stroke:0.12px #1a1a1a;">Album</div>
<svg style="position:absolute;left:523px;top:53.5px;" width="11" height="9" viewBox="0 0 11 9"><rect x="0.5" y="0.5" width="10" height="8" fill="#dcebf8" stroke="#3f8fd0"/><rect x="0.5" y="0.5" width="10" height="2.5" fill="#3f8fd0"/><line x1="5.5" y1="0" x2="5.5" y2="9" stroke="#3f8fd0"/><line x1="0" y1="5.58" x2="11" y2="5.58" stroke="#3f8fd0"/></svg>
<div class="t" style="left:535.8px;top:53.7px;font-size:9.2px;color:#1a1a1a;font-weight:normal;-webkit-text-stroke:0.12px #1a1a1a;">Artist</div>
<svg style="position:absolute;left:580px;top:53.5px;" width="11" height="9" viewBox="0 0 11 9"><rect x="0.5" y="0.5" width="10" height="8" fill="#dcebf8" stroke="#3f8fd0"/><rect x="0.5" y="0.5" width="10" height="2.5" fill="#3f8fd0"/><line x1="5.5" y1="0" x2="5.5" y2="9" stroke="#3f8fd0"/><line x1="0" y1="5.58" x2="11" y2="5.58" stroke="#3f8fd0"/></svg>
<div class="t" style="left:592.8px;top:53.7px;font-size:9.2px;color:#1a1a1a;font-weight:normal;-webkit-text-stroke:0.12px #1a1a1a;">*Customer</div>
<svg style="position:absolute;left:294px;top:49px;" width="6" height="17" viewBox="0 0 6 17"><path d="M0.5 17 V5 Q0.5 1 4 0.5" stroke="#c8c8c8" fill="none"/></svg>
<svg style="position:absolute;left:368.5px;top:49px;" width="6" height="17" viewBox="0 0 6 17"><path d="M0.5 17 V5 Q0.5 1 4 0.5" stroke="#c8c8c8" fill="none"/></svg>
<svg style="position:absolute;left:458px;top:49px;" width="6" height="17" viewBox="0 0 6 17"><path d="M0.5 17 V5 Q0.5 1 4 0.5" stroke="#c8c8c8" fill="none"/></svg>
<svg style="position:absolute;left:518.5px;top:49px;" width="6" height="17" viewBox="0 0 6 17"><path d="M0.5 17 V5 Q0.5 1 4 0.5" stroke="#c8c8c8" fill="none"/></svg>
<svg style="position:absolute;left:575.5px;top:49px;" width="6" height="17" viewBox="0 0 6 17"><path d="M0.5 17 V5 Q0.5 1 4 0.5" stroke="#c8c8c8" fill="none"/></svg>
<svg style="position:absolute;left:654px;top:48.5px;" width="114" height="18" viewBox="0 0 114 18"><defs><linearGradient id="ga" x1="0" y1="0" x2="0" y2="1"><stop offset="0" stop-color="#a9c8ea"/><stop offset="1" stop-color="#7ea9d8"/></linearGradient></defs><path d="M0.5 18 V6 Q0.5 1 5 1 H88 Q94 1 98 6 L108 16 Q110 18 114 18 Z" fill="url(#ga)" stroke="#7aa0cc" stroke-width="0.8"/></svg>
<svg style="position:absolute;left:657px;top:52.5px;" width="10" height="11" viewBox="0 0 10 11"><rect x="0" y="0" width="10" height="11" rx="1.5" fill="#4f8fd0"/><path d="M7 1 L9 3 L5 8 L4 9" stroke="#2a5a3a" stroke-width="1" fill="none"/><circle cx="7" cy="8.5" r="2.2" fill="#5bbf5b"/></svg>
<div class="t" style="left:670.5px;top:53px;font-size:9.2px;color:#111;font-weight:normal;">SQLite - Chinoo</div>
<svg style="position:absolute;left:741.5px;top:53.5px;" width="9" height="9" viewBox="0 0 9 9"><path d="M1 1 L8 8 M8 1 L1 8" stroke="#333" stroke-width="1.6"/><path d="M2.5 2.5 L6.5 6.5 M6.5 2.5 L2.5 6.5" stroke="#b8d0ec" stroke-width="0.7"/></svg>
<div class="t" style="left:772px;top:50.5px;font-size:8px;color:#333;font-weight:normal;">&#187;</div>
<div class="t" style="left:778px;top:56px;font-size:7px;color:#333;font-weight:normal;">5</div>
<svg style="position:absolute;left:839.5px;top:53.5px;" width="8" height="4" viewBox="0 0 8 4"><rect x="0.5" y="0.5" width="7" height="3" rx="1.2" fill="#fafafa" stroke="#555" stroke-width="0.9"/></svg>
<svg style="position:absolute;left:855px;top:53px;" width="8" height="8" viewBox="0 0 8 8"><rect x="0.5" y="0.5" width="7" height="7" fill="#fafafa" stroke="#555" stroke-width="0.9"/><rect x="0.5" y="0.5" width="7" height="1.8" fill="#555"/></svg>
<div style="position:absolute;left:222.5px;top:65.5px;width:646px;height:395.5px;border:2px solid #8cb0d8;border-top:1.5px solid #7aa3d3;box-sizing:border-box;background:#ececec;"></div>
<svg style="position:absolute;left:226px;top:69px;" width="11" height="13" viewBox="0 0 11 13"><rect x="0" y="1" width="10" height="11" rx="1.5" fill="#4f8fd0"/><path d="M8 0 L10 2 L5 9" stroke="#2a5a3a" stroke-width="1" fill="none"/><circle cx="7.5" cy="10" r="2.5" fill="#5bbf5b"/></svg>
<div class="t" style="left:240.5px;top:71.2px;font-size:9.2px;color:#1a1a1a;font-weight:normal;-webkit-text-stroke:0.12px #1a1a1a;">Properties</div>
<div style="position:absolute;left:286.5px;top:67.5px;width:66px;height:16.5px;background:#fafafa;border:1px solid #d0d0d0;border-bottom:none;box-sizing:border-box;"></div>
<svg style="position:absolute;left:288px;top:69px;" width="12" height="12" viewBox="0 0 12 12"><rect x="4" y="0.5" width="3.5" height="3" fill="none" stroke="#3f8fd0" stroke-width="0.8"/><path d="M5.75 3.5 v2 M1.5 5.5 h8.5 M1.5 5.5 v2 M5.75 5.5 v2 M10 5.5 v2" stroke="#3f8fd0" stroke-width="0.8" fill="none"/><rect x="0" y="7.5" width="3" height="3" fill="none" stroke="#3f8fd0" stroke-width="0.8"/><rect x="4.25" y="7.5" width="3" height="3" fill="none" stroke="#3f8fd0" stroke-width="0.8"/><rect x="8.5" y="7.5" width="3" height="3" fill="none" stroke="#3f8fd0" stroke-width="0.8"/></svg>
<div class="t" style="left:302.5px;top:71.2px;font-size:9.2px;color:#1a1a1a;font-weight:normal;-webkit-text-stroke:0.12px #1a1a1a;">ER Diagram</div>
<svg style="position:absolute;left:779px;top:69.5px;" width="11" height="12" viewBox="0 0 11 12"><rect x="0" y="1" width="10" height="10" rx="1.5" fill="#a8c8e8"/><circle cx="7.5" cy="9" r="2.5" fill="#a8dca8"/></svg>
<div class="t" style="left:790.5px;top:71.8px;font-size:8.05px;color:#a8a8a8;font-weight:normal;">SQLite - Chinook.db</div>
<div style="position:absolute;left:224.5px;top:83px;width:9px;height:358.5px;background:#fbfbfb;"></div>
<div style="position:absolute;left:224.5px;top:83px;width:9px;height:15px;background:#e6e6e6;"></div>
<svg style="position:absolute;left:226px;top:86px;" width="8" height="10" viewBox="0 0 8 10"><path d="M1 1 L6.5 5 L1 9 Z" fill="none" stroke="#444" stroke-width="1.1"/></svg>
<svg style="position:absolute;left:233px;top:83px;background:#fff" width="634" height="358.5"><g stroke="#d4d4d4" stroke-width="1"><line x1="0.5" y1="0" x2="0.5" y2="358.5" /><line x1="12.5" y1="0" x2="12.5" y2="358.5" /><line x1="24.5" y1="0" x2="24.5" y2="358.5" /><line x1="36.5" y1="0" x2="36.5" y2="358.5" /><line x1="48.5" y1="0" x2="48.5" y2="358.5" /><line x1="60.5" y1="0" x2="60.5" y2="358.5" /><line x1="72.5" y1="0" x2="72.5" y2="358.5" /><line x1="84.5" y1="0" x2="84.5" y2="358.5" /><line x1="96.5" y1="0" x2="96.5" y2="358.5" /><line x1="108.5" y1="0" x2="108.5" y2="358.5" /><line x1="120.5" y1="0" x2="120.5" y2="358.5" /><line x1="132.5" y1="0" x2="132.5" y2="358.5" /><line x1="144.5" y1="0" x2="144.5" y2="358.5" /><line x1="156.5" y1="0" x2="156.5" y2="358.5" /><line x1="168.5" y1="0" x2="168.5" y2="358.5" /><line x1="180.5" y1="0" x2="180.5" y2="358.5" /><line x1="192.5" y1="0" x2="192.5" y2="358.5" /><line x1="203.5" y1="0" x2="203.5" y2="358.5" /><line x1="215.5" y1="0" x2="215.5" y2="358.5" /><line x1="227.5" y1="0" x2="227.5" y2="358.5" /><line x1="239.5" y1="0" x2="239.5" y2="358.5" /><line x1="251.5" y1="0" x2="251.5" y2="358.5" /><line x1="263.5" y1="0" x2="263.5" y2="358.5" /><line x1="275.5" y1="0" x2="275.5" y2="358.5" /><line x1="287.5" y1="0" x2="287.5" y2="358.5" /><line x1="299.5" y1="0" x2="299.5" y2="358.5" /><line x1="311.5" y1="0" x2="311.5" y2="358.5" /><line x1="323.5" y1="0" x2="323.5" y2="358.5" /><line x1="335.5" y1="0" x2="335.5" y2="358.5" /><line x1="347.5" y1="0" x2="347.5" y2="358.5" /><line x1="359.5" y1="0" x2="359.5" y2="358.5" /><line x1="371.5" y1="0" x2="371.5" y2="358.5" /><line x1="383.5" y1="0" x2="383.5" y2="358.5" /><line x1="395.5" y1="0" x2="395.5" y2="358.5" /><line x1="407.5" y1="0" x2="407.5" y2="358.5" /><line x1="419.5" y1="0" x2="419.5" y2="358.5" /><line x1="431.5" y1="0" x2="431.5" y2="358.5" /><line x1="443.5" y1="0" x2="443.5" y2="358.5" /><line x1="455.5" y1="0" x2="455.5" y2="358.5" /><line x1="467.5" y1="0" x2="467.5" y2="358.5" /><line x1="479.5" y1="0" x2="479.5" y2="358.5" /><line x1="491.5" y1="0" x2="491.5" y2="358.5" /><line x1="503.5" y1="0" x2="503.5" y2="358.5" /><line x1="515.5" y1="0" x2="515.5" y2="358.5" /><line x1="527.5" y1="0" x2="527.5" y2="358.5" /><line x1="539.5" y1="0" x2="539.5" y2="358.5" /><line x1="551.5" y1="0" x2="551.5" y2="358.5" /><line x1="563.5" y1="0" x2="563.5" y2="358.5" /><line x1="575.5" y1="0" x2="575.5" y2="358.5" /><line x1="587.5" y1="0" x2="587.5" y2="358.5" /><line x1="598.5" y1="0" x2="598.5" y2="358.5" /><line x1="610.5" y1="0" x2="610.5" y2="358.5" /><line x1="622.5" y1="0" x2="622.5" y2="358.5" /><line x1="634.5" y1="0" x2="634.5" y2="358.5" /><line x1="0" y1="0.5" x2="634" y2="0.5" /><line x1="0" y1="12.5" x2="634" y2="12.5" /><line x1="0" y1="24.5" x2="634" y2="24.5" /><line x1="0" y1="36.5" x2="634" y2="36.5" /><line x1="0" y1="48.5" x2="634" y2="48.5" /><line x1="0" y1="60.5" x2="634" y2="60.5" /><line x1="0" y1="72.5" x2="634" y2="72.5" /><line x1="0" y1="84.5" x2="634" y2="84.5" /><line x1="0" y1="96.5" x2="634" y2="96.5" /><line x1="0" y1="108.5" x2="634" y2="108.5" /><line x1="0" y1="120.5" x2="634" y2="120.5" /><line x1="0" y1="132.5" x2="634" y2="132.5" /><line x1="0" y1="144.5" x2="634" y2="144.5" /><line x1="0" y1="156.5" x2="634" y2="156.5" /><line x1="0" y1="168.5" x2="634" y2="168.5" /><line x1="0" y1="180.5" x2="634" y2="180.5" /><line x1="0" y1="192.5" x2="634" y2="192.5" /><line x1="0" y1="203.5" x2="634" y2="203.5" /><line x1="0" y1="215.5" x2="634" y2="215.5" /><line x1="0" y1="227.5" x2="634" y2="227.5" /><line x1="0" y1="239.5" x2="634" y2="239.5" /><line x1="0" y1="251.5" x2="634" y2="251.5" /><line x1="0" y1="263.5" x2="634" y2="263.5" /><line x1="0" y1="275.5" x2="634" y2="275.5" /><line x1="0" y1="287.5" x2="634" y2="287.5" /><line x1="0" y1="299.5" x2="634" y2="299.5" /><line x1="0" y1="311.5" x2="634" y2="311.5" /><line x1="0" y1="323.5" x2="634" y2="323.5" /><line x1="0" y1="335.5" x2="634" y2="335.5" /><line x1="0" y1="347.5" x2="634" y2="347.5" /></g></svg>
<div class="t" style="left:229px;top:447.9px;font-size:8.6px;color:#1a1a1a;font-weight:normal;-webkit-text-stroke:0.1px #1a1a1a;">Entity Diagram SQLite - Chinook.db</div>
<svg style="position:absolute;left:676px;top:445px;" width="11" height="11" viewBox="0 0 11 11"><circle cx="4.5" cy="4.5" r="3.3" stroke="#3f8fd0" stroke-width="1.4" fill="none"/><path d="M7 7 L10 10" stroke="#3f8fd0" stroke-width="1.6"/></svg>
<div style="position:absolute;left:691px;top:443.5px;width:44px;height:14px;background:#fff;border:1px solid #d8d8d8;box-sizing:border-box;"></div>
<div class="t" style="left:694.5px;top:447.8px;font-size:8.8px;color:#222;font-weight:normal;">88%</div>
<div style="position:absolute;left:723.5px;top:444px;width:11px;height:13px;background:#5b9ad8;border-radius:2px;"></div>
<svg style="position:absolute;left:725.5px;top:448px;" width="7" height="5" viewBox="0 0 7 5"><path d="M0.5 0.5 L3.5 3.5 L6.5 0.5" stroke="#fff" fill="none" stroke-width="1"/></svg>
<svg style="position:absolute;left:739px;top:445px;" width="11" height="11" viewBox="0 0 11 11"><circle cx="4.5" cy="4.5" r="3.5" stroke="#666" stroke-width="1" fill="none"/><path d="M7 7 L10 10" stroke="#666" stroke-width="1.4"/><path d="M2.8 4.5 h3.4 M4.5 2.8 v3.4" stroke="#3f8fd0" stroke-width="0.9"/></svg>
<svg style="position:absolute;left:754px;top:445px;" width="11" height="11" viewBox="0 0 11 11"><circle cx="4.5" cy="4.5" r="3.5" stroke="#666" stroke-width="1" fill="none"/><path d="M7 7 L10 10" stroke="#666" stroke-width="1.4"/><path d="M2.8 4.5 h3.4" stroke="#3f8fd0" stroke-width="0.9"/></svg>
<div style="position:absolute;left:765px;top:443px;width:1px;height:15px;background:#d4d4d4;"></div>
<svg style="position:absolute;left:770px;top:445px;" width="12" height="11" viewBox="0 0 12 11"><rect x="0.5" y="0.5" width="4" height="4" fill="none" stroke="#6a9cd0"/><rect x="6.5" y="3.5" width="4" height="3" fill="none" stroke="#6a9cd0"/><rect x="0.5" y="6.5" width="4" height="4" fill="none" stroke="#6a9cd0"/></svg>
<svg style="position:absolute;left:786px;top:444px;" width="12" height="12" viewBox="0 0 12 12"><path d="M0 2.5 h12 M0 5 h12 M0 7.5 h12 M0 10 h12 M2.5 0 v12 M5 0 v12 M7.5 0 v12 M10 0 v12" stroke="#6a9cd0" stroke-width="0.8"/></svg>
<svg style="position:absolute;left:802px;top:444px;" width="12" height="12" viewBox="0 0 12 12"><path d="M2 6 a4 4 0 0 1 7 -3 M10 6 a4 4 0 0 1 -7 3" stroke="#6a9cd0" stroke-width="1.2" fill="none"/><rect x="4" y="4" width="4" height="4" fill="#cfe0f0" stroke="#6a9cd0" stroke-width="0.6"/></svg>
<div style="position:absolute;left:816px;top:443px;width:1px;height:15px;background:#d4d4d4;"></div>
<svg style="position:absolute;left:821px;top:444.5px;" width="12" height="11" viewBox="0 0 12 11"><rect x="0.5" y="0.5" width="11" height="10" fill="#fff" stroke="#3f7fb8"/><path d="M2 8 l3 -3 l2 2 l3 -3" stroke="#3aa650" fill="none"/></svg>
<svg style="position:absolute;left:837px;top:444.5px;" width="12" height="11" viewBox="0 0 12 11"><rect x="2" y="0.5" width="8" height="3" fill="#cfe0f0" stroke="#8ab0d8" stroke-width="0.7"/><rect x="0.5" y="3.5" width="11" height="5" fill="#a8c8e8" stroke="#8ab0d8" stroke-width="0.7"/><rect x="2.5" y="7" width="7" height="3.5" fill="#fff" stroke="#8ab0d8" stroke-width="0.7"/></svg>
<svg style="position:absolute;left:852px;top:444px;" width="12" height="12" viewBox="0 0 12 12"><circle cx="6" cy="6" r="3.5" fill="#3f8fd0"/><path d="M6 0.5 v11 M0.5 6 h11 M2 2 l8 8 M10 2 l-8 8" stroke="#3f8fd0" stroke-width="2"/><circle cx="6" cy="6" r="1.5" fill="#fff"/></svg>
<div style="position:absolute;left:591px;top:462px;width:1px;height:15px;background:#cfcfcf;"></div>
<div class="t" style="left:596px;top:464.5px;font-size:9.2px;color:#222;font-weight:normal;">UTC</div>
<div style="position:absolute;left:618px;top:462px;width:1px;height:15px;background:#cfcfcf;"></div>
<div class="t" style="left:623px;top:464.5px;font-size:9.2px;color:#222;font-weight:normal;">en_US</div>
<svg style="position:absolute;left:652px;top:462px;" width="2" height="15" viewBox="0 0 2 15"><rect x="0.5" y="0" width="1" height="1" fill="#9a9a9a"/><rect x="0.5" y="3" width="1" height="1" fill="#9a9a9a"/><rect x="0.5" y="6" width="1" height="1" fill="#9a9a9a"/><rect x="0.5" y="9" width="1" height="1" fill="#9a9a9a"/><rect x="0.5" y="12" width="1" height="1" fill="#9a9a9a"/></svg>
<div style="position:absolute;left:245.3px;top:95.3px;width:61.0px;height:202.39999999999998px;background:#fff;border:1px solid #8a7a30;box-sizing:border-box;"></div>
<div style="position:absolute;left:245.3px;top:95.3px;width:61.0px;height:10.0px;background:#f6ec52;border:1px solid #8a7a30;box-sizing:border-box;"></div>
<div class="t" style="left:245.3px;width:61.0px;top:96.2px;font-size:7.8px;color:#2a2a10;text-align:center;-webkit-text-stroke:0.12px #2a2a10;"><svg style="display:inline-block;vertical-align:-0.5px;margin-right:2px" width="9" height="7" viewBox="0 0 9 7"><rect x="0" y="0" width="9" height="7" rx="1" fill="#4aa868"/><rect x="1" y="1.5" width="3" height="2" fill="#b8e8b8"/><rect x="5" y="1.5" width="3" height="2" fill="#b8e8b8"/><rect x="1" y="4.5" width="3" height="1.5" fill="#fff"/><rect x="5" y="4.5" width="3" height="1.5" fill="#fff"/></svg>Employee</div>
<div style="position:absolute;left:246.3px;top:118.6px;width:59.0px;height:1px;background:#555;"></div>
<div style="position:absolute;left:246.3px;top:105.3px;width:59.0px;height:1px;background:#555;"></div>
<div class="t" style="left:246.8px;top:109.64999999999999px;font-size:5.6px;color:#5494c8;font-weight:bold;letter-spacing:0.1px;-webkit-text-stroke:0.3px #5494c8;">123</div>
<svg style="position:absolute;left:254.10000000000002px;top:112.44999999999999px;" width="4" height="5" viewBox="0 0 4 5"><circle cx="2" cy="1.8" r="1.5" fill="#f4e4a0"/><rect x="1.3" y="3" width="1.4" height="2" fill="#888"/></svg>
<div class="t" style="left:258.6px;top:109.85px;font-size:7.8px;color:#111;font-weight:bold;">EmployeeId</div>
<div class="t" style="left:246.8px;top:124.95px;font-size:4.6px;color:#5494c8;font-weight:bold;letter-spacing:0px;-webkit-text-stroke:0.35px #4a8fc8;">ABC</div>
<div class="t" style="left:258.40000000000003px;top:124.5px;font-size:7.8px;color:#1a1a1a;font-weight:normal;-webkit-text-stroke:0.15px #1a1a1a;">LastName</div>
<div class="t" style="left:246.8px;top:137.54999999999998px;font-size:4.6px;color:#5494c8;font-weight:bold;letter-spacing:0px;-webkit-text-stroke:0.35px #4a8fc8;">ABC</div>
<div class="t" style="left:258.40000000000003px;top:137.1px;font-size:7.8px;color:#1a1a1a;font-weight:normal;-webkit-text-stroke:0.15px #1a1a1a;">FirstName</div>
<div class="t" style="left:246.8px;top:150.14999999999998px;font-size:4.6px;color:#5494c8;font-weight:bold;letter-spacing:0px;-webkit-text-stroke:0.35px #4a8fc8;">ABC</div>
<div class="t" style="left:258.40000000000003px;top:149.7px;font-size:7.8px;color:#1a1a1a;font-weight:normal;-webkit-text-stroke:0.15px #1a1a1a;">Title</div>
<div class="t" style="left:246.8px;top:162.55px;font-size:5.0px;color:#5494c8;font-weight:bold;letter-spacing:0.25px;-webkit-text-stroke:0.3px #5494c8;">123</div>
<div class="t" style="left:258.40000000000003px;top:162.3px;font-size:7.8px;color:#1a1a1a;font-weight:normal;-webkit-text-stroke:0.15px #1a1a1a;">ReportsTo</div>
<div class="t" style="left:246.8px;top:175.15px;font-size:5.0px;color:#5494c8;font-weight:bold;letter-spacing:0.25px;-webkit-text-stroke:0.3px #5494c8;">123</div>
<div class="t" style="left:258.40000000000003px;top:174.9px;font-size:7.8px;color:#1a1a1a;font-weight:normal;-webkit-text-stroke:0.15px #1a1a1a;">BirthDate</div>
<div class="t" style="left:246.8px;top:187.75px;font-size:5.0px;color:#5494c8;font-weight:bold;letter-spacing:0.25px;-webkit-text-stroke:0.3px #5494c8;">123</div>
<div class="t" style="left:258.40000000000003px;top:187.5px;font-size:7.8px;color:#1a1a1a;font-weight:normal;-webkit-text-stroke:0.15px #1a1a1a;">HireDate</div>
<div class="t" style="left:246.8px;top:200.54999999999998px;font-size:4.6px;color:#5494c8;font-weight:bold;letter-spacing:0px;-webkit-text-stroke:0.35px #4a8fc8;">ABC</div>
<div class="t" style="left:258.40000000000003px;top:200.1px;font-size:7.8px;color:#1a1a1a;font-weight:normal;-webkit-text-stroke:0.15px #1a1a1a;">Address</div>
<div class="t" style="left:246.8px;top:213.14999999999998px;font-size:4.6px;color:#5494c8;font-weight:bold;letter-spacing:0px;-webkit-text-stroke:0.35px #4a8fc8;">ABC</div>
<div class="t" style="left:258.40000000000003px;top:212.7px;font-size:7.8px;color:#1a1a1a;font-weight:normal;-webkit-text-stroke:0.15px #1a1a1a;">City</div>
<div class="t" style="left:246.8px;top:225.75px;font-size:4.6px;color:#5494c8;font-weight:bold;letter-spacing:0px;-webkit-text-stroke:0.35px #4a8fc8;">ABC</div>
<div class="t" style="left:258.40000000000003px;top:225.3px;font-size:7.8px;color:#1a1a1a;font-weight:normal;-webkit-text-stroke:0.15px #1a1a1a;">State</div>
<div class="t" style="left:246.8px;top:238.34999999999997px;font-size:4.6px;color:#5494c8;font-weight:bold;letter-spacing:0px;-webkit-text-stroke:0.35px #4a8fc8;">ABC</div>
<div class="t" style="left:258.40000000000003px;top:237.89999999999998px;font-size:7.8px;color:#1a1a1a;font-weight:normal;-webkit-text-stroke:0.15px #1a1a1a;">Country</div>
<div class="t" style="left:246.8px;top:250.95px;font-size:4.6px;color:#5494c8;font-weight:bold;letter-spacing:0px;-webkit-text-stroke:0.35px #4a8fc8;">ABC</div>
<div class="t" style="left:258.40000000000003px;top:250.5px;font-size:7.8px;color:#1a1a1a;font-weight:normal;-webkit-text-stroke:0.15px #1a1a1a;">PostalCode</div>
<div class="t" style="left:246.8px;top:263.55px;font-size:4.6px;color:#5494c8;font-weight:bold;letter-spacing:0px;-webkit-text-stroke:0.35px #4a8fc8;">ABC</div>
<div class="t" style="left:258.40000000000003px;top:263.1px;font-size:7.8px;color:#1a1a1a;font-weight:normal;-webkit-text-stroke:0.15px #1a1a1a;">Phone</div>
<div class="t" style="left:246.8px;top:276.15px;font-size:4.6px;color:#5494c8;font-weight:bold;letter-spacing:0px;-webkit-text-stroke:0.35px #4a8fc8;">ABC</div>
<div class="t" style="left:258.40000000000003px;top:275.7px;font-size:7.8px;color:#1a1a1a;font-weight:normal;-webkit-text-stroke:0.15px #1a1a1a;">Fax</div>
<div class="t" style="left:246.8px;top:288.74999999999994px;font-size:4.6px;color:#5494c8;font-weight:bold;letter-spacing:0px;-webkit-text-stroke:0.35px #4a8fc8;">ABC</div>
<div class="t" style="left:258.40000000000003px;top:288.29999999999995px;font-size:7.8px;color:#1a1a1a;font-weight:normal;-webkit-text-stroke:0.15px #1a1a1a;">Email</div>
<div style="position:absolute;left:353.4px;top:107.3px;width:65.10000000000002px;height:177.2px;background:#fff;border:1px solid #8a7a30;box-sizing:border-box;"></div>
<div style="position:absolute;left:353.4px;top:107.3px;width:65.10000000000002px;height:9.799999999999997px;background:#f6ec52;border:1px solid #8a7a30;box-sizing:border-box;"></div>
<div class="t" style="left:353.4px;width:65.10000000000002px;top:108.0px;font-size:7.8px;color:#2a2a10;text-align:center;-webkit-text-stroke:0.12px #2a2a10;"><svg style="display:inline-block;vertical-align:-0.5px;margin-right:2px" width="9" height="7" viewBox="0 0 9 7"><rect x="0" y="0" width="9" height="7" rx="1" fill="#4aa868"/><rect x="1" y="1.5" width="3" height="2" fill="#b8e8b8"/><rect x="5" y="1.5" width="3" height="2" fill="#b8e8b8"/><rect x="1" y="4.5" width="3" height="1.5" fill="#fff"/><rect x="5" y="4.5" width="3" height="1.5" fill="#fff"/></svg>Customer</div>
<div style="position:absolute;left:354.4px;top:131.4px;width:63.10000000000002px;height:1px;background:#555;"></div>
<div style="position:absolute;left:354.4px;top:117.1px;width:63.10000000000002px;height:1px;background:#555;"></div>
<div class="t" style="left:354.9px;top:121.95px;font-size:5.6px;color:#5494c8;font-weight:bold;letter-spacing:0.1px;-webkit-text-stroke:0.3px #5494c8;">123</div>
<svg style="position:absolute;left:362.2px;top:124.75px;" width="4" height="5" viewBox="0 0 4 5"><circle cx="2" cy="1.8" r="1.5" fill="#f4e4a0"/><rect x="1.3" y="3" width="1.4" height="2" fill="#888"/></svg>
<div class="t" style="left:366.7px;top:122.15px;font-size:7.8px;color:#111;font-weight:bold;">CustomerId</div>
<div class="t" style="left:354.9px;top:137.45px;font-size:4.6px;color:#5494c8;font-weight:bold;letter-spacing:0px;-webkit-text-stroke:0.35px #4a8fc8;">ABC</div>
<div class="t" style="left:366.5px;top:137.0px;font-size:7.8px;color:#1a1a1a;font-weight:normal;-webkit-text-stroke:0.15px #1a1a1a;">FirstName</div>
<div class="t" style="left:354.9px;top:150.0px;font-size:4.6px;color:#5494c8;font-weight:bold;letter-spacing:0px;-webkit-text-stroke:0.35px #4a8fc8;">ABC</div>
<div class="t" style="left:366.5px;top:149.55px;font-size:7.8px;color:#1a1a1a;font-weight:normal;-webkit-text-stroke:0.15px #1a1a1a;">LastName</div>
<div class="t" style="left:354.9px;top:162.54999999999998px;font-size:4.6px;color:#5494c8;font-weight:bold;letter-spacing:0px;-webkit-text-stroke:0.35px #4a8fc8;">ABC</div>
<div class="t" style="left:366.5px;top:162.1px;font-size:7.8px;color:#1a1a1a;font-weight:normal;-webkit-text-stroke:0.15px #1a1a1a;">Company</div>
<div class="t" style="left:354.9px;top:175.1px;font-size:4.6px;color:#5494c8;font-weight:bold;letter-spacing:0px;-webkit-text-stroke:0.35px #4a8fc8;">ABC</div>
<div class="t" style="left:366.5px;top:174.65px;font-size:7.8px;color:#1a1a1a;font-weight:normal;-webkit-text-stroke:0.15px #1a1a1a;">Address</div>
<div class="t" style="left:354.9px;top:187.64999999999998px;font-size:4.6px;color:#5494c8;font-weight:bold;letter-spacing:0px;-webkit-text-stroke:0.35px #4a8fc8;">ABC</div>
<div class="t" style="left:366.5px;top:187.2px;font-size:7.8px;color:#1a1a1a;font-weight:normal;-webkit-text-stroke:0.15px #1a1a1a;">City</div>
<div class="t" style="left:354.9px;top:200.2px;font-size:4.6px;color:#5494c8;font-weight:bold;letter-spacing:0px;-webkit-text-stroke:0.35px #4a8fc8;">ABC</div>
<div class="t" style="left:366.5px;top:199.75px;font-size:7.8px;color:#1a1a1a;font-weight:normal;-webkit-text-stroke:0.15px #1a1a1a;">State</div>
<div class="t" style="left:354.9px;top:212.75px;font-size:4.6px;color:#5494c8;font-weight:bold;letter-spacing:0px;-webkit-text-stroke:0.35px #4a8fc8;">ABC</div>
<div class="t" style="left:366.5px;top:212.3px;font-size:7.8px;color:#1a1a1a;font-weight:normal;-webkit-text-stroke:0.15px #1a1a1a;">Country</div>
<div class="t" style="left:354.9px;top:225.3px;font-size:4.6px;color:#5494c8;font-weight:bold;letter-spacing:0px;-webkit-text-stroke:0.35px #4a8fc8;">ABC</div>
<div class="t" style="left:366.5px;top:224.85000000000002px;font-size:7.8px;color:#1a1a1a;font-weight:normal;-webkit-text-stroke:0.15px #1a1a1a;">PostalCode</div>
<div class="t" style="left:354.9px;top:237.85px;font-size:4.6px;color:#5494c8;font-weight:bold;letter-spacing:0px;-webkit-text-stroke:0.35px #4a8fc8;">ABC</div>
<div class="t" style="left:366.5px;top:237.4px;font-size:7.8px;color:#1a1a1a;font-weight:normal;-webkit-text-stroke:0.15px #1a1a1a;">Phone</div>
<div class="t" style="left:354.9px;top:250.39999999999998px;font-size:4.6px;color:#5494c8;font-weight:bold;letter-spacing:0px;-webkit-text-stroke:0.35px #4a8fc8;">ABC</div>
<div class="t" style="left:366.5px;top:249.95px;font-size:7.8px;color:#1a1a1a;font-weight:normal;-webkit-text-stroke:0.15px #1a1a1a;">Fax</div>
<div class="t" style="left:354.9px;top:262.95px;font-size:4.6px;color:#5494c8;font-weight:bold;letter-spacing:0px;-webkit-text-stroke:0.35px #4a8fc8;">ABC</div>
<div class="t" style="left:366.5px;top:262.5px;font-size:7.8px;color:#1a1a1a;font-weight:normal;-webkit-text-stroke:0.15px #1a1a1a;">Email</div>
<div class="t" style="left:354.9px;top:275.3px;font-size:5.0px;color:#5494c8;font-weight:bold;letter-spacing:0.25px;-webkit-text-stroke:0.3px #5494c8;">123</div>
<div class="t" style="left:366.5px;top:275.05px;font-size:7.8px;color:#1a1a1a;font-weight:normal;-webkit-text-stroke:0.15px #1a1a1a;">SupportRepId</div>
<div style="position:absolute;left:628.3px;top:95.2px;width:80.20000000000005px;height:128.10000000000002px;background:#fff;border:1px solid #8a5a48;box-sizing:border-box;"></div>
<div style="position:absolute;left:628.3px;top:95.2px;width:80.20000000000005px;height:10.799999999999997px;background:#ec987c;border:1px solid #8a5a48;box-sizing:border-box;"></div>
<div class="t" style="left:628.3px;width:80.20000000000005px;top:96.9px;font-size:7.8px;color:#3a2010;text-align:center;-webkit-text-stroke:0.12px #3a2010;"><svg style="display:inline-block;vertical-align:-0.5px;margin-right:2px" width="9" height="7" viewBox="0 0 9 7"><rect x="0" y="0" width="9" height="7" rx="1" fill="#6a8fd0"/><rect x="1" y="1.5" width="3" height="2" fill="#c0d0f0"/><rect x="5" y="1.5" width="3" height="2" fill="#c0d0f0"/><rect x="1" y="4.5" width="3" height="1.5" fill="#fff"/><rect x="5" y="4.5" width="3" height="1.5" fill="#fff"/></svg>Invoice</div>
<div style="position:absolute;left:629.3px;top:119.5px;width:78.20000000000005px;height:1px;background:#555;"></div>
<div style="position:absolute;left:629.3px;top:106.0px;width:78.20000000000005px;height:1px;background:#555;"></div>
<div class="t" style="left:629.8px;top:110.45px;font-size:5.6px;color:#5494c8;font-weight:bold;letter-spacing:0.1px;-webkit-text-stroke:0.3px #5494c8;">123</div>
<svg style="position:absolute;left:637.0999999999999px;top:113.25px;" width="4" height="5" viewBox="0 0 4 5"><circle cx="2" cy="1.8" r="1.5" fill="#f4e4a0"/><rect x="1.3" y="3" width="1.4" height="2" fill="#888"/></svg>
<div class="t" style="left:641.5999999999999px;top:110.65px;font-size:7.8px;color:#111;font-weight:bold;">InvoiceId</div>
<div class="t" style="left:629.8px;top:125.75px;font-size:5.0px;color:#5494c8;font-weight:bold;letter-spacing:0.25px;-webkit-text-stroke:0.3px #5494c8;">123</div>
<div class="t" style="left:641.4px;top:125.5px;font-size:7.8px;color:#1a1a1a;font-weight:normal;-webkit-text-stroke:0.15px #1a1a1a;">CustomerId</div>
<div class="t" style="left:629.8px;top:138.15px;font-size:5.0px;color:#5494c8;font-weight:bold;letter-spacing:0.25px;-webkit-text-stroke:0.3px #5494c8;">123</div>
<div class="t" style="left:641.4px;top:137.9px;font-size:7.8px;color:#1a1a1a;font-weight:normal;-webkit-text-stroke:0.15px #1a1a1a;">InvoiceDate</div>
<div class="t" style="left:629.8px;top:150.75px;font-size:4.6px;color:#5494c8;font-weight:bold;letter-spacing:0px;-webkit-text-stroke:0.35px #4a8fc8;">ABC</div>
<div class="t" style="left:641.4px;top:150.3px;font-size:7.8px;color:#1a1a1a;font-weight:normal;-webkit-text-stroke:0.15px #1a1a1a;">BillingAddress</div>
<div class="t" style="left:629.8px;top:163.14999999999998px;font-size:4.6px;color:#5494c8;font-weight:bold;letter-spacing:0px;-webkit-text-stroke:0.35px #4a8fc8;">ABC</div>
<div class="t" style="left:641.4px;top:162.7px;font-size:7.8px;color:#1a1a1a;font-weight:normal;-webkit-text-stroke:0.15px #1a1a1a;">BillingCity</div>
<div class="t" style="left:629.8px;top:175.54999999999998px;font-size:4.6px;color:#5494c8;font-weight:bold;letter-spacing:0px;-webkit-text-stroke:0.35px #4a8fc8;">ABC</div>
<div class="t" style="left:641.4px;top:175.1px;font-size:7.8px;color:#1a1a1a;font-weight:normal;-webkit-text-stroke:0.15px #1a1a1a;">BillingState</div>
<div class="t" style="left:629.8px;top:187.95px;font-size:4.6px;color:#5494c8;font-weight:bold;letter-spacing:0px;-webkit-text-stroke:0.35px #4a8fc8;">ABC</div>
<div class="t" style="left:641.4px;top:187.5px;font-size:7.8px;color:#1a1a1a;font-weight:normal;-webkit-text-stroke:0.15px #1a1a1a;">BillingCountry</div>
<div class="t" style="left:629.8px;top:200.35px;font-size:4.6px;color:#5494c8;font-weight:bold;letter-spacing:0px;-webkit-text-stroke:0.35px #4a8fc8;">ABC</div>
<div class="t" style="left:641.4px;top:199.9px;font-size:7.8px;color:#1a1a1a;font-weight:normal;-webkit-text-stroke:0.15px #1a1a1a;">BillingPostalCode</div>
<div class="t" style="left:629.8px;top:212.55px;font-size:5.0px;color:#5494c8;font-weight:bold;letter-spacing:0.25px;-webkit-text-stroke:0.3px #5494c8;">123</div>
<div class="t" style="left:641.4px;top:212.3px;font-size:7.8px;color:#1a1a1a;font-weight:normal;-webkit-text-stroke:0.15px #1a1a1a;">Total</div>
<div style="position:absolute;left:760.5px;top:191.4px;width:67.60000000000002px;height:76.6px;background:#fff;border:1px solid #8a5a48;box-sizing:border-box;"></div>
<div style="position:absolute;left:760.5px;top:191.4px;width:67.60000000000002px;height:11.400000000000006px;background:#ec987c;border:1px solid #8a5a48;box-sizing:border-box;"></div>
<div class="t" style="left:760.5px;width:67.60000000000002px;top:193.70000000000002px;font-size:7.8px;color:#3a2010;text-align:center;-webkit-text-stroke:0.12px #3a2010;"><svg style="display:inline-block;vertical-align:-0.5px;margin-right:2px" width="9" height="7" viewBox="0 0 9 7"><rect x="0" y="0" width="9" height="7" rx="1" fill="#6a8fd0"/><rect x="1" y="1.5" width="3" height="2" fill="#c0d0f0"/><rect x="5" y="1.5" width="3" height="2" fill="#c0d0f0"/><rect x="1" y="4.5" width="3" height="1.5" fill="#fff"/><rect x="5" y="4.5" width="3" height="1.5" fill="#fff"/></svg>InvoiceLine</div>
<div style="position:absolute;left:761.5px;top:215.2px;width:65.60000000000002px;height:1px;background:#555;"></div>
<div style="position:absolute;left:761.5px;top:202.8px;width:65.60000000000002px;height:1px;background:#555;"></div>
<div class="t" style="left:762.0px;top:206.70000000000002px;font-size:5.6px;color:#5494c8;font-weight:bold;letter-spacing:0.1px;-webkit-text-stroke:0.3px #5494c8;">123</div>
<svg style="position:absolute;left:769.3px;top:209.5px;" width="4" height="5" viewBox="0 0 4 5"><circle cx="2" cy="1.8" r="1.5" fill="#f4e4a0"/><rect x="1.3" y="3" width="1.4" height="2" fill="#888"/></svg>
<div class="t" style="left:773.8px;top:206.9px;font-size:7.8px;color:#111;font-weight:bold;">InvoiceLineId</div>
<div class="t" style="left:762.0px;top:221.45px;font-size:5.0px;color:#5494c8;font-weight:bold;letter-spacing:0.25px;-webkit-text-stroke:0.3px #5494c8;">123</div>
<div class="t" style="left:773.6px;top:221.2px;font-size:7.8px;color:#1a1a1a;font-weight:normal;-webkit-text-stroke:0.15px #1a1a1a;">InvoiceId</div>
<div class="t" style="left:762.0px;top:233.95px;font-size:5.0px;color:#5494c8;font-weight:bold;letter-spacing:0.25px;-webkit-text-stroke:0.3px #5494c8;">123</div>
<div class="t" style="left:773.6px;top:233.7px;font-size:7.8px;color:#1a1a1a;font-weight:normal;-webkit-text-stroke:0.15px #1a1a1a;">TrackId</div>
<div class="t" style="left:762.0px;top:246.45px;font-size:5.0px;color:#5494c8;font-weight:bold;letter-spacing:0.25px;-webkit-text-stroke:0.3px #5494c8;">123</div>
<div class="t" style="left:773.6px;top:246.2px;font-size:7.8px;color:#1a1a1a;font-weight:normal;-webkit-text-stroke:0.15px #1a1a1a;">UnitPrice</div>
<div class="t" style="left:762.0px;top:258.95px;font-size:5.0px;color:#5494c8;font-weight:bold;letter-spacing:0.25px;-webkit-text-stroke:0.3px #5494c8;">123</div>
<div class="t" style="left:773.6px;top:258.7px;font-size:7.8px;color:#1a1a1a;font-weight:normal;-webkit-text-stroke:0.15px #1a1a1a;">Quantity</div>
<div style="position:absolute;left:484.7px;top:191.4px;width:57.599999999999966px;height:42.0px;background:#fff;border:1px solid #5a9a68;box-sizing:border-box;"></div>
<div style="position:absolute;left:484.7px;top:191.4px;width:57.599999999999966px;height:10.099999999999994px;background:#8deaa2;border:1px solid #5a9a68;box-sizing:border-box;"></div>
<div class="t" style="left:484.7px;width:57.599999999999966px;top:192.4px;font-size:7.8px;color:#143a20;text-align:center;-webkit-text-stroke:0.12px #143a20;"><svg style="display:inline-block;vertical-align:-0.5px;margin-right:2px" width="9" height="7" viewBox="0 0 9 7"><rect x="0" y="0" width="9" height="7" rx="1" fill="#3f8fd0"/><rect x="1" y="1.5" width="3" height="2" fill="#a8d0f0"/><rect x="5" y="1.5" width="3" height="2" fill="#a8d0f0"/><rect x="1" y="4.5" width="3" height="1.5" fill="#fff"/><rect x="5" y="4.5" width="3" height="1.5" fill="#fff"/></svg>PlaylistTrack</div>
<div style="position:absolute;left:485.7px;top:228px;width:55.599999999999966px;height:1px;background:#555;"></div>
<div style="position:absolute;left:485.7px;top:201.5px;width:55.599999999999966px;height:1px;background:#555;"></div>
<div class="t" style="left:486.2px;top:206.20000000000002px;font-size:5.6px;color:#5494c8;font-weight:bold;letter-spacing:0.1px;-webkit-text-stroke:0.3px #5494c8;">123</div>
<svg style="position:absolute;left:493.5px;top:209.0px;" width="4" height="5" viewBox="0 0 4 5"><circle cx="2" cy="1.8" r="1.5" fill="#f4e4a0"/><rect x="1.3" y="3" width="1.4" height="2" fill="#888"/></svg>
<div class="t" style="left:498.0px;top:206.4px;font-size:7.8px;color:#111;font-weight:bold;">PlaylistId</div>
<div class="t" style="left:486.2px;top:218.20000000000002px;font-size:5.6px;color:#5494c8;font-weight:bold;letter-spacing:0.1px;-webkit-text-stroke:0.3px #5494c8;">123</div>
<svg style="position:absolute;left:493.5px;top:221.0px;" width="4" height="5" viewBox="0 0 4 5"><circle cx="2" cy="1.8" r="1.5" fill="#f4e4a0"/><rect x="1.3" y="3" width="1.4" height="2" fill="#888"/></svg>
<div class="t" style="left:498.0px;top:218.4px;font-size:7.8px;color:#111;font-weight:bold;">TrackId</div>
<div style="position:absolute;left:484.5px;top:263.4px;width:51.89999999999998px;height:38.5px;background:#fff;border:1px solid #5a9a68;box-sizing:border-box;"></div>
<div style="position:absolute;left:484.5px;top:263.4px;width:51.89999999999998px;height:9.600000000000023px;background:#8deaa2;border:1px solid #5a9a68;box-sizing:border-box;"></div>
<div class="t" style="left:484.5px;width:51.89999999999998px;top:263.9px;font-size:7.8px;color:#143a20;text-align:center;-webkit-text-stroke:0.12px #143a20;"><svg style="display:inline-block;vertical-align:-0.5px;margin-right:2px" width="9" height="7" viewBox="0 0 9 7"><rect x="0" y="0" width="9" height="7" rx="1" fill="#3f8fd0"/><rect x="1" y="1.5" width="3" height="2" fill="#a8d0f0"/><rect x="5" y="1.5" width="3" height="2" fill="#a8d0f0"/><rect x="1" y="4.5" width="3" height="1.5" fill="#fff"/><rect x="5" y="4.5" width="3" height="1.5" fill="#fff"/></svg>Playlist</div>
<div style="position:absolute;left:485.5px;top:287.1px;width:49.89999999999998px;height:1px;background:#555;"></div>
<div style="position:absolute;left:485.5px;top:273px;width:49.89999999999998px;height:1px;background:#555;"></div>
<div class="t" style="left:486.0px;top:277.75px;font-size:5.6px;color:#5494c8;font-weight:bold;letter-spacing:0.1px;-webkit-text-stroke:0.3px #5494c8;">123</div>
<svg style="position:absolute;left:493.3px;top:280.55px;" width="4" height="5" viewBox="0 0 4 5"><circle cx="2" cy="1.8" r="1.5" fill="#f4e4a0"/><rect x="1.3" y="3" width="1.4" height="2" fill="#888"/></svg>
<div class="t" style="left:497.8px;top:277.95px;font-size:7.8px;color:#111;font-weight:bold;">PlaylistId</div>
<div class="t" style="left:486.0px;top:293.45px;font-size:4.6px;color:#5494c8;font-weight:bold;letter-spacing:0px;-webkit-text-stroke:0.35px #4a8fc8;">ABC</div>
<div class="t" style="left:497.6px;top:293.0px;font-size:7.8px;color:#1a1a1a;font-weight:normal;-webkit-text-stroke:0.15px #1a1a1a;">Name</div>
<div style="position:absolute;left:640.6px;top:263.7px;width:61.5px;height:125.60000000000002px;background:#fff;border:1px solid #888888;box-sizing:border-box;"></div>
<div style="position:absolute;left:640.6px;top:263.7px;width:61.5px;height:9.5px;background:#ebebeb;border:1px solid #888888;box-sizing:border-box;"></div>
<div class="t" style="left:640.6px;width:61.5px;top:264.09999999999997px;font-size:7.8px;color:#2a2a2a;text-align:center;-webkit-text-stroke:0.12px #2a2a2a;"><svg style="display:inline-block;vertical-align:-0.5px;margin-right:2px" width="9" height="7" viewBox="0 0 9 7"><rect x="0" y="0" width="9" height="7" rx="1" fill="#3f8fd0"/><rect x="1" y="1.5" width="3" height="2" fill="#a8d0f0"/><rect x="5" y="1.5" width="3" height="2" fill="#a8d0f0"/><rect x="1" y="4.5" width="3" height="1.5" fill="#fff"/><rect x="5" y="4.5" width="3" height="1.5" fill="#fff"/></svg>Track</div>
<div style="position:absolute;left:641.6px;top:286.9px;width:59.5px;height:1px;background:#555;"></div>
<div style="position:absolute;left:641.6px;top:273.2px;width:59.5px;height:1px;background:#555;"></div>
<div class="t" style="left:642.1px;top:277.74999999999994px;font-size:5.6px;color:#5494c8;font-weight:bold;letter-spacing:0.1px;-webkit-text-stroke:0.3px #5494c8;">123</div>
<svg style="position:absolute;left:649.4px;top:280.54999999999995px;" width="4" height="5" viewBox="0 0 4 5"><circle cx="2" cy="1.8" r="1.5" fill="#f4e4a0"/><rect x="1.3" y="3" width="1.4" height="2" fill="#888"/></svg>
<div class="t" style="left:653.9px;top:277.94999999999993px;font-size:7.8px;color:#111;font-weight:bold;">TrackId</div>
<div class="t" style="left:642.1px;top:293.45px;font-size:4.6px;color:#5494c8;font-weight:bold;letter-spacing:0px;-webkit-text-stroke:0.35px #4a8fc8;">ABC</div>
<div class="t" style="left:653.7px;top:293.0px;font-size:7.8px;color:#1a1a1a;font-weight:normal;-webkit-text-stroke:0.15px #1a1a1a;">Name</div>
<div class="t" style="left:642.1px;top:305.78px;font-size:5.0px;color:#5494c8;font-weight:bold;letter-spacing:0.25px;-webkit-text-stroke:0.3px #5494c8;">123</div>
<div class="t" style="left:653.7px;top:305.53px;font-size:7.8px;color:#1a1a1a;font-weight:normal;-webkit-text-stroke:0.15px #1a1a1a;">AlbumId</div>
<div class="t" style="left:642.1px;top:318.31px;font-size:5.0px;color:#5494c8;font-weight:bold;letter-spacing:0.25px;-webkit-text-stroke:0.3px #5494c8;">123</div>
<div class="t" style="left:653.7px;top:318.06px;font-size:7.8px;color:#1a1a1a;font-weight:normal;-webkit-text-stroke:0.15px #1a1a1a;">MediaTypeId</div>
<div class="t" style="left:642.1px;top:330.84px;font-size:5.0px;color:#5494c8;font-weight:bold;letter-spacing:0.25px;-webkit-text-stroke:0.3px #5494c8;">123</div>
<div class="t" style="left:653.7px;top:330.59px;font-size:7.8px;color:#1a1a1a;font-weight:normal;-webkit-text-stroke:0.15px #1a1a1a;">GenreId</div>
<div class="t" style="left:642.1px;top:343.57px;font-size:4.6px;color:#5494c8;font-weight:bold;letter-spacing:0px;-webkit-text-stroke:0.35px #4a8fc8;">ABC</div>
<div class="t" style="left:653.7px;top:343.12px;font-size:7.8px;color:#1a1a1a;font-weight:normal;-webkit-text-stroke:0.15px #1a1a1a;">Composer</div>
<div class="t" style="left:642.1px;top:355.9px;font-size:5.0px;color:#5494c8;font-weight:bold;letter-spacing:0.25px;-webkit-text-stroke:0.3px #5494c8;">123</div>
<div class="t" style="left:653.7px;top:355.65px;font-size:7.8px;color:#1a1a1a;font-weight:normal;-webkit-text-stroke:0.15px #1a1a1a;">Milliseconds</div>
<div class="t" style="left:642.1px;top:368.43px;font-size:5.0px;color:#5494c8;font-weight:bold;letter-spacing:0.25px;-webkit-text-stroke:0.3px #5494c8;">123</div>
<div class="t" style="left:653.7px;top:368.18px;font-size:7.8px;color:#1a1a1a;font-weight:normal;-webkit-text-stroke:0.15px #1a1a1a;">Bytes</div>
<div class="t" style="left:642.1px;top:380.96px;font-size:5.0px;color:#5494c8;font-weight:bold;letter-spacing:0.25px;-webkit-text-stroke:0.3px #5494c8;">123</div>
<div class="t" style="left:653.7px;top:380.71px;font-size:7.8px;color:#1a1a1a;font-weight:normal;-webkit-text-stroke:0.15px #1a1a1a;">UnitPrice</div>
<div style="position:absolute;left:317.3px;top:323.1px;width:45.39999999999998px;height:38.799999999999955px;background:#fff;border:1px solid #5a3a90;box-sizing:border-box;"></div>
<div style="position:absolute;left:317.3px;top:323.1px;width:45.39999999999998px;height:9.599999999999966px;background:#8d55d8;border:1px solid #5a3a90;box-sizing:border-box;"></div>
<div class="t" style="left:317.3px;width:45.39999999999998px;top:323.59999999999997px;font-size:7.8px;color:#24105a;text-align:center;-webkit-text-stroke:0.12px #24105a;"><svg style="display:inline-block;vertical-align:-0.5px;margin-right:2px" width="9" height="7" viewBox="0 0 9 7"><rect x="0" y="0" width="9" height="7" rx="1" fill="#8ab8f0"/><rect x="1" y="1.5" width="3" height="2" fill="#c8e0ff"/><rect x="5" y="1.5" width="3" height="2" fill="#c8e0ff"/><rect x="1" y="4.5" width="3" height="1.5" fill="#fff"/><rect x="5" y="4.5" width="3" height="1.5" fill="#fff"/></svg>Artist</div>
<div style="position:absolute;left:318.3px;top:346.5px;width:43.39999999999998px;height:1px;background:#555;"></div>
<div style="position:absolute;left:318.3px;top:332.7px;width:43.39999999999998px;height:1px;background:#555;"></div>
<div class="t" style="left:318.8px;top:337.3px;font-size:5.6px;color:#5494c8;font-weight:bold;letter-spacing:0.1px;-webkit-text-stroke:0.3px #5494c8;">123</div>
<svg style="position:absolute;left:326.1px;top:340.1px;" width="4" height="5" viewBox="0 0 4 5"><circle cx="2" cy="1.8" r="1.5" fill="#f4e4a0"/><rect x="1.3" y="3" width="1.4" height="2" fill="#888"/></svg>
<div class="t" style="left:330.6px;top:337.5px;font-size:7.8px;color:#111;font-weight:bold;">ArtistId</div>
<div class="t" style="left:318.8px;top:352.65px;font-size:4.6px;color:#5494c8;font-weight:bold;letter-spacing:0px;-webkit-text-stroke:0.35px #4a8fc8;">ABC</div>
<div class="t" style="left:330.40000000000003px;top:352.2px;font-size:7.8px;color:#1a1a1a;font-weight:normal;-webkit-text-stroke:0.15px #1a1a1a;">Name</div>
<div style="position:absolute;left:388.4px;top:299.1px;width:49.400000000000034px;height:63.099999999999966px;background:#fff;border:1px solid #5a3a90;box-sizing:border-box;"></div>
<div style="position:absolute;left:388.4px;top:299.1px;width:49.400000000000034px;height:9.699999999999989px;background:#8d55d8;border:1px solid #5a3a90;box-sizing:border-box;"></div>
<div class="t" style="left:388.4px;width:49.400000000000034px;top:299.7px;font-size:7.8px;color:#24105a;text-align:center;-webkit-text-stroke:0.12px #24105a;"><svg style="display:inline-block;vertical-align:-0.5px;margin-right:2px" width="9" height="7" viewBox="0 0 9 7"><rect x="0" y="0" width="9" height="7" rx="1" fill="#8ab8f0"/><rect x="1" y="1.5" width="3" height="2" fill="#c8e0ff"/><rect x="5" y="1.5" width="3" height="2" fill="#c8e0ff"/><rect x="1" y="4.5" width="3" height="1.5" fill="#fff"/><rect x="5" y="4.5" width="3" height="1.5" fill="#fff"/></svg>Album</div>
<div style="position:absolute;left:389.4px;top:322.3px;width:47.400000000000034px;height:1px;background:#555;"></div>
<div style="position:absolute;left:389.4px;top:308.8px;width:47.400000000000034px;height:1px;background:#555;"></div>
<div class="t" style="left:389.9px;top:313.25px;font-size:5.6px;color:#5494c8;font-weight:bold;letter-spacing:0.1px;-webkit-text-stroke:0.3px #5494c8;">123</div>
<svg style="position:absolute;left:397.2px;top:316.05px;" width="4" height="5" viewBox="0 0 4 5"><circle cx="2" cy="1.8" r="1.5" fill="#f4e4a0"/><rect x="1.3" y="3" width="1.4" height="2" fill="#888"/></svg>
<div class="t" style="left:401.7px;top:313.45px;font-size:7.8px;color:#111;font-weight:bold;">AlbumId</div>
<div class="t" style="left:389.9px;top:328.65px;font-size:4.6px;color:#5494c8;font-weight:bold;letter-spacing:0px;-webkit-text-stroke:0.35px #4a8fc8;">ABC</div>
<div class="t" style="left:401.5px;top:328.2px;font-size:7.8px;color:#1a1a1a;font-weight:normal;-webkit-text-stroke:0.15px #1a1a1a;">Title</div>
<div class="t" style="left:389.9px;top:340.84999999999997px;font-size:5.0px;color:#5494c8;font-weight:bold;letter-spacing:0.25px;-webkit-text-stroke:0.3px #5494c8;">123</div>
<div class="t" style="left:401.5px;top:340.59999999999997px;font-size:7.8px;color:#1a1a1a;font-weight:normal;-webkit-text-stroke:0.15px #1a1a1a;">ArtistId</div>
<div class="t" style="left:390.4px;top:352.5px;font-size:3.0px;color:#5494c8;font-weight:bold;line-height:3.1px;">010<br>011<br>110</div>
<div class="t" style="left:401.5px;top:353.0px;font-size:7.8px;color:#1a1a1a;font-weight:normal;-webkit-text-stroke:0.15px #1a1a1a;">Column1</div>
<div style="position:absolute;left:257.6px;top:371px;width:27.899999999999977px;height:41.5px;background:#fff;border:1px solid #888888;box-sizing:border-box;"></div>
<div style="position:absolute;left:257.6px;top:371px;width:27.899999999999977px;height:10.399999999999977px;background:#ebebeb;border:1px solid #888888;box-sizing:border-box;"></div>
<div class="t" style="left:257.6px;width:27.899999999999977px;top:372.29999999999995px;font-size:7.8px;color:#2a2a2a;text-align:center;-webkit-text-stroke:0.12px #2a2a2a;"><svg style="display:inline-block;vertical-align:-0.5px;margin-right:2px" width="9" height="7" viewBox="0 0 9 7"><rect x="0" y="0" width="9" height="7" rx="1" fill="#3f8fd0"/><rect x="1" y="1.5" width="3" height="2" fill="#a8d0f0"/><rect x="5" y="1.5" width="3" height="2" fill="#a8d0f0"/><rect x="1" y="4.5" width="3" height="1.5" fill="#fff"/><rect x="5" y="4.5" width="3" height="1.5" fill="#fff"/></svg>foo</div>
<div style="position:absolute;left:258.6px;top:385.3px;width:25.899999999999977px;height:1px;background:#555;"></div>
<div style="position:absolute;left:258.6px;top:381.4px;width:25.899999999999977px;height:1px;background:#555;"></div>
<div class="t" style="left:259.1px;top:391.25px;font-size:5.0px;color:#5494c8;font-weight:bold;letter-spacing:0.25px;-webkit-text-stroke:0.3px #5494c8;">123</div>
<div class="t" style="left:270.70000000000005px;top:391.0px;font-size:7.8px;color:#1a1a1a;font-weight:normal;-webkit-text-stroke:0.15px #1a1a1a;">bar</div>
<div class="t" style="left:259.1px;top:403.84999999999997px;font-size:4.6px;color:#5494c8;font-weight:bold;letter-spacing:0px;-webkit-text-stroke:0.35px #4a8fc8;">ABC</div>
<div class="t" style="left:270.70000000000005px;top:403.4px;font-size:7.8px;color:#1a1a1a;font-weight:normal;-webkit-text-stroke:0.15px #1a1a1a;">baz</div>
<div style="position:absolute;left:365px;top:383.4px;width:46.80000000000001px;height:38.10000000000002px;background:#fff;border:1px solid #5a3a90;box-sizing:border-box;"></div>
<div style="position:absolute;left:365px;top:383.4px;width:46.80000000000001px;height:9.300000000000011px;background:#8d55d8;border:1px solid #5a3a90;box-sizing:border-box;"></div>
<div class="t" style="left:365px;width:46.80000000000001px;top:383.59999999999997px;font-size:7.8px;color:#24105a;text-align:center;-webkit-text-stroke:0.12px #24105a;"><svg style="display:inline-block;vertical-align:-0.5px;margin-right:2px" width="9" height="7" viewBox="0 0 9 7"><rect x="0" y="0" width="9" height="7" rx="1" fill="#8ab8f0"/><rect x="1" y="1.5" width="3" height="2" fill="#c8e0ff"/><rect x="5" y="1.5" width="3" height="2" fill="#c8e0ff"/><rect x="1" y="4.5" width="3" height="1.5" fill="#fff"/><rect x="5" y="4.5" width="3" height="1.5" fill="#fff"/></svg>Genre</div>
<div style="position:absolute;left:366px;top:406.5px;width:44.80000000000001px;height:1px;background:#555;"></div>
<div style="position:absolute;left:366px;top:392.7px;width:44.80000000000001px;height:1px;background:#555;"></div>
<div class="t" style="left:366.5px;top:397.3px;font-size:5.6px;color:#5494c8;font-weight:bold;letter-spacing:0.1px;-webkit-text-stroke:0.3px #5494c8;">123</div>
<svg style="position:absolute;left:373.8px;top:400.1px;" width="4" height="5" viewBox="0 0 4 5"><circle cx="2" cy="1.8" r="1.5" fill="#f4e4a0"/><rect x="1.3" y="3" width="1.4" height="2" fill="#888"/></svg>
<div class="t" style="left:378.3px;top:397.5px;font-size:7.8px;color:#111;font-weight:bold;">GenreId</div>
<div class="t" style="left:366.5px;top:412.45px;font-size:4.6px;color:#5494c8;font-weight:bold;letter-spacing:0px;-webkit-text-stroke:0.35px #4a8fc8;">ABC</div>
<div class="t" style="left:378.1px;top:412.0px;font-size:7.8px;color:#1a1a1a;font-weight:normal;-webkit-text-stroke:0.15px #1a1a1a;">Name</div>
<div style="position:absolute;left:520.4px;top:383.4px;width:65.30000000000007px;height:37.80000000000001px;background:#fff;border:1px solid #888888;box-sizing:border-box;"></div>
<div style="position:absolute;left:520.4px;top:383.4px;width:65.30000000000007px;height:9.0px;background:#ebebeb;border:1px solid #888888;box-sizing:border-box;"></div>
<div class="t" style="left:520.4px;width:65.30000000000007px;top:383.29999999999995px;font-size:7.8px;color:#2a2a2a;text-align:center;-webkit-text-stroke:0.12px #2a2a2a;"><svg style="display:inline-block;vertical-align:-0.5px;margin-right:2px" width="9" height="7" viewBox="0 0 9 7"><rect x="0" y="0" width="9" height="7" rx="1" fill="#3f8fd0"/><rect x="1" y="1.5" width="3" height="2" fill="#a8d0f0"/><rect x="5" y="1.5" width="3" height="2" fill="#a8d0f0"/><rect x="1" y="4.5" width="3" height="1.5" fill="#fff"/><rect x="5" y="4.5" width="3" height="1.5" fill="#fff"/></svg>MediaType</div>
<div style="position:absolute;left:521.4px;top:406.5px;width:63.30000000000007px;height:1px;background:#555;"></div>
<div style="position:absolute;left:521.4px;top:392.4px;width:63.30000000000007px;height:1px;background:#555;"></div>
<div class="t" style="left:521.9px;top:397.15px;font-size:5.6px;color:#5494c8;font-weight:bold;letter-spacing:0.1px;-webkit-text-stroke:0.3px #5494c8;">123</div>
<svg style="position:absolute;left:529.1999999999999px;top:399.95px;" width="4" height="5" viewBox="0 0 4 5"><circle cx="2" cy="1.8" r="1.5" fill="#f4e4a0"/><rect x="1.3" y="3" width="1.4" height="2" fill="#888"/></svg>
<div class="t" style="left:533.6999999999999px;top:397.34999999999997px;font-size:7.8px;color:#111;font-weight:bold;">MediaTypeId</div>
<div class="t" style="left:521.9px;top:412.45px;font-size:4.6px;color:#5494c8;font-weight:bold;letter-spacing:0px;-webkit-text-stroke:0.35px #4a8fc8;">ABC</div>
<div class="t" style="left:533.5px;top:412.0px;font-size:7.8px;color:#1a1a1a;font-weight:normal;-webkit-text-stroke:0.15px #1a1a1a;">Name</div>
<svg style="position:absolute;left:0;top:0" width="870" height="490"><path d="M310.0 195.1 L349.6 195.1" fill="none" stroke="#333" stroke-width="0.9" stroke-dasharray="3.5 3.4"/><path d="M306.8 195.1 L310.0 191.9 L313.2 195.1 L310.0 198.3 Z" fill="#fff" stroke="#222" stroke-width="0.9"/><circle cx="349.6" cy="195.1" r="2.6" fill="#111"/><path d="M422.4 190.3 L624.6 164.6" fill="none" stroke="#333" stroke-width="0.9" stroke-dasharray="3.5 3.4"/><path d="M419.2 190.3 L422.4 187.1 L425.6 190.3 L422.4 193.5 Z" fill="#fff" stroke="#222" stroke-width="0.9"/><circle cx="624.6" cy="164.6" r="2.6" fill="#111"/><path d="M307.4 268.3 L321.6 296.8 L274.7 345.5 L274.7 299.5" fill="none" stroke="#333" stroke-width="0.9" stroke-dasharray="3.5 3.4"/><path d="M304.2 268.3 L307.4 265.1 L310.6 268.3 L307.4 271.5 Z" fill="#fff" stroke="#222" stroke-width="0.9"/><circle cx="274.7" cy="300.0" r="2.6" fill="#111"/><path d="M365.7 337.7 L385.0 334.3" fill="none" stroke="#333" stroke-width="0.9" stroke-dasharray="3.5 3.4"/><path d="M362.5 337.7 L365.7 334.5 L368.9 337.7 L365.7 340.9 Z" fill="#fff" stroke="#222" stroke-width="0.9"/><circle cx="385.0" cy="334.3" r="2.6" fill="#111"/><path d="M440.0 330.0 L636.7 326.7" fill="none" stroke="#333" stroke-width="0.9" stroke-dasharray="3.5 3.4"/><path d="M436.8 330.0 L440.0 326.8 L443.2 330.0 L440.0 333.2 Z" fill="#fff" stroke="#222" stroke-width="0.9"/><circle cx="636.7" cy="326.7" r="2.6" fill="#111"/><path d="M415.7 394.3 L636.7 335.7" fill="none" stroke="#333" stroke-width="0.9" stroke-dasharray="3.5 3.4"/><path d="M412.5 394.3 L415.7 391.1 L418.9 394.3 L415.7 397.5 Z" fill="#fff" stroke="#222" stroke-width="0.9"/><circle cx="636.7" cy="335.7" r="2.6" fill="#111"/><path d="M586.0 379.3 L636.7 347.3" fill="none" stroke="#333" stroke-width="0.9" stroke-dasharray="3.5 3.4"/><path d="M582.8 379.3 L586.0 376.1 L589.2 379.3 L586.0 382.5 Z" fill="#fff" stroke="#222" stroke-width="0.9"/><circle cx="636.7" cy="347.3" r="2.6" fill="#111"/><path d="M711.3 182.9 L757.0 208.0" fill="none" stroke="#333" stroke-width="0.9" stroke-dasharray="3.5 3.4"/><path d="M708.1 182.9 L711.3 179.7 L714.5 182.9 L711.3 186.1 Z" fill="#fff" stroke="#222" stroke-width="0.9"/><circle cx="757.0" cy="208.0" r="2.6" fill="#111"/><path d="M705.0 298.6 L757.0 256.6" fill="none" stroke="#333" stroke-width="0.9" stroke-dasharray="3.5 3.4"/><path d="M701.8 298.6 L705.0 295.4 L708.2 298.6 L705.0 301.8 Z" fill="#fff" stroke="#222" stroke-width="0.9"/><circle cx="757.0" cy="256.6" r="2.6" fill="#111"/><path d="M510.5 235.0 L510.0 263.4" fill="none" stroke="#333" stroke-width="0.9" /><circle cx="510.5" cy="235.5" r="2.6" fill="#111"/><path d="M544.1 234.2 L640.6 304.5" fill="none" stroke="#333" stroke-width="0.9" /><circle cx="544.1" cy="234.2" r="2.6" fill="#111"/></svg>
</body></html>
